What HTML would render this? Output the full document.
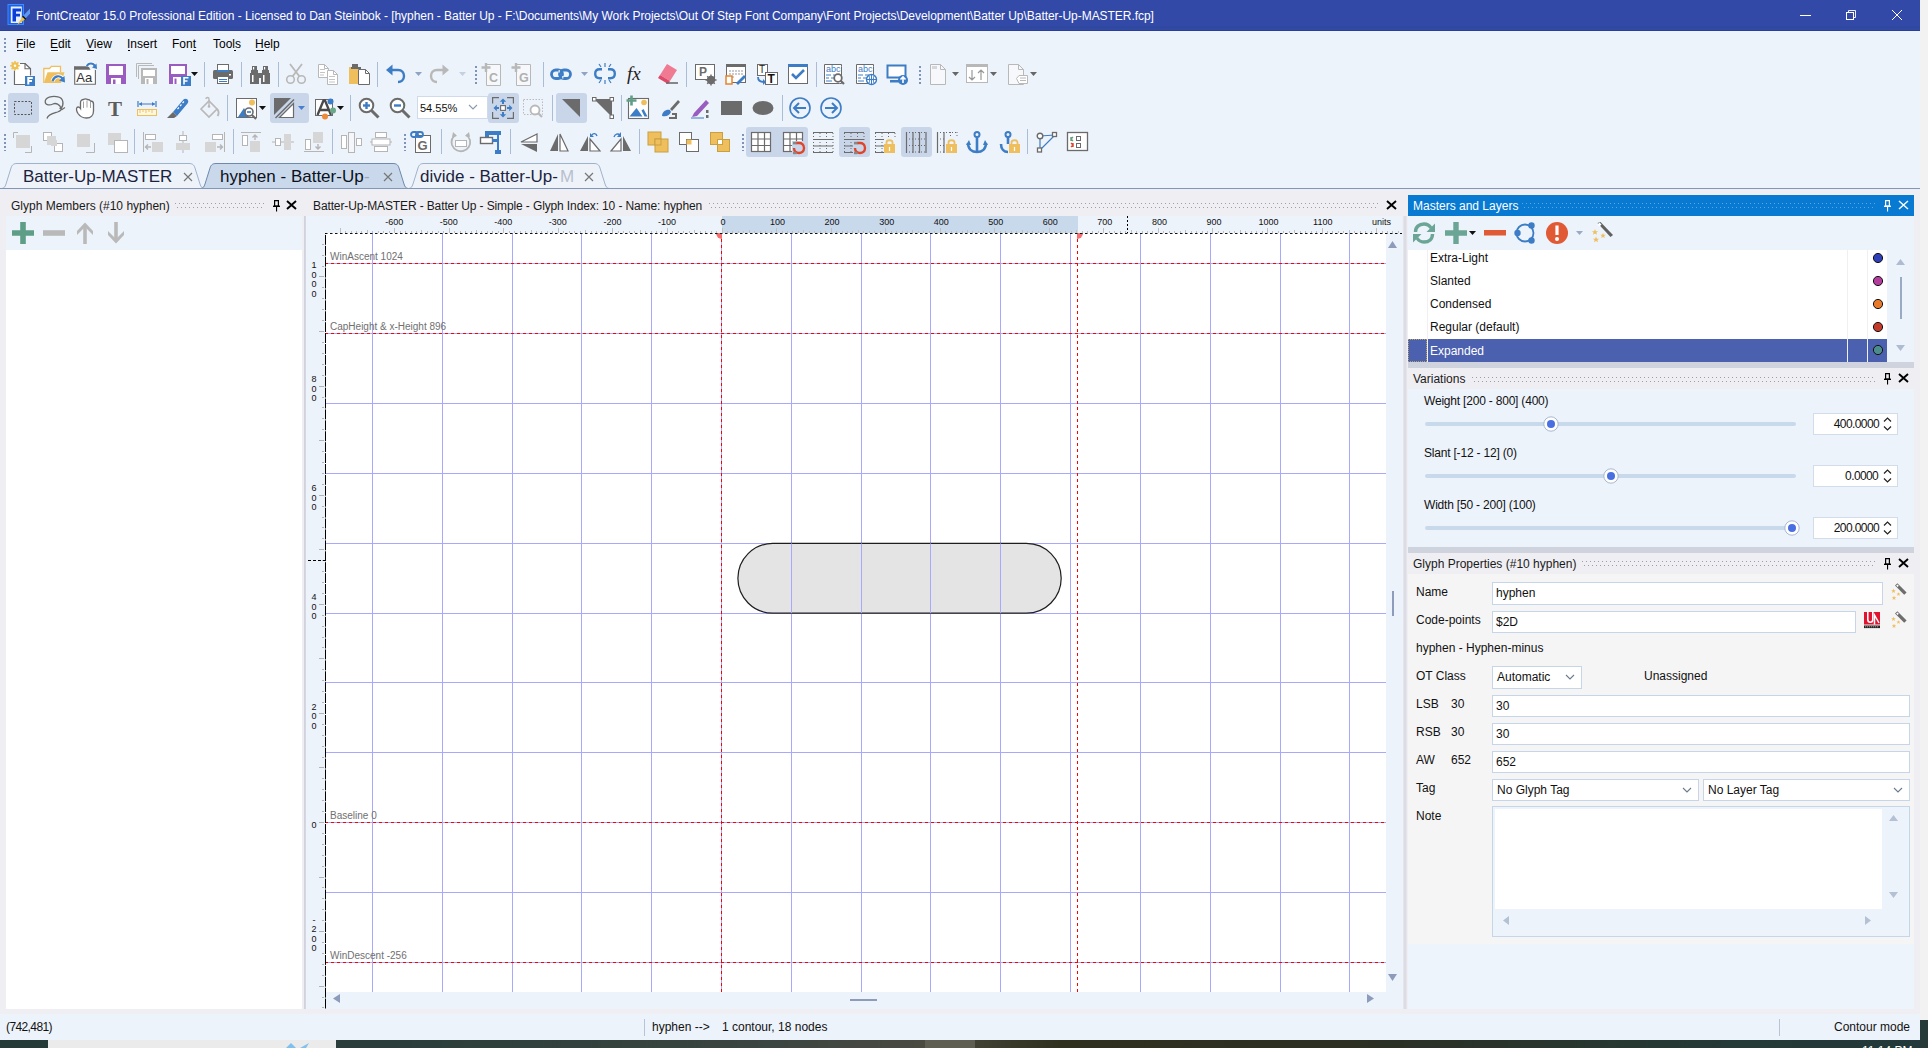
<!DOCTYPE html><html><head><meta charset="utf-8"><style>
html,body{margin:0;padding:0;}
body{width:1928px;height:1048px;overflow:hidden;position:relative;background:#f2f2f2;font-family:"Liberation Sans",sans-serif;}
.t{position:absolute;white-space:pre;}
div,svg{box-sizing:border-box;}
svg{overflow:visible;}
</style></head><body>
<div style="position:absolute;left:0px;top:0px;width:1920px;height:1040px;background:#edf3fb"></div>
<div style="position:absolute;left:0px;top:0px;width:1920px;height:31px;background:linear-gradient(#3249a7 0,#3249a7 26px,#2f49a1 26px,#2f49a1 29px,#3449a6 29px,#3449a6 30px,#283d9c 30px)"></div>
<div class="t" style="left:36px;top:9.84px;font-size:12px;line-height:12px;color:#fff;letter-spacing:-0.045px">FontCreator 15.0 Professional Edition - Licensed to Dan Steinbok - [hyphen - Batter Up - F:\Documents\My Work Projects\Out Of Step Font Company\Font Projects\Development\Batter Up\Batter-Up-MASTER.fcp]</div>
<div style="position:absolute;left:1800px;top:15px;width:11px;height:1px;background:#fff"></div>
<svg style="position:absolute;left:1845px;top:9px;" width="13" height="13" viewBox="0 0 13 13"><rect x="1.5" y="3.5" width="7" height="7" fill="none" stroke="#fff"/><path d="M3.5 3.5V1.5H10.5V8.5H8.5" fill="none" stroke="#fff" stroke-width="0.9"/></svg>
<svg style="position:absolute;left:1891px;top:9px;" width="12" height="12" viewBox="0 0 12 12"><path d="M1 1L11 11M11 1L1 11" stroke="#fff" stroke-width="1"/></svg>
<div class="t" style="left:16px;top:38.34px;font-size:12px;line-height:12px;color:#000;">File</div>
<div style="position:absolute;left:16.5px;top:50px;width:6.8px;height:1px;background:#000"></div>
<div class="t" style="left:50px;top:38.34px;font-size:12px;line-height:12px;color:#000;">Edit</div>
<div style="position:absolute;left:50.5px;top:50px;width:7.5px;height:1px;background:#000"></div>
<div class="t" style="left:86px;top:38.34px;font-size:12px;line-height:12px;color:#000;">View</div>
<div style="position:absolute;left:86.5px;top:50px;width:7.5px;height:1px;background:#000"></div>
<div class="t" style="left:127px;top:38.34px;font-size:12px;line-height:12px;color:#000;">Insert</div>
<div style="position:absolute;left:127.5px;top:50px;width:2.8px;height:1px;background:#000"></div>
<div class="t" style="left:172px;top:38.34px;font-size:12px;line-height:12px;color:#000;">Font</div>
<div style="position:absolute;left:193.2px;top:50px;width:2.8px;height:1px;background:#000"></div>
<div class="t" style="left:213px;top:38.34px;font-size:12px;line-height:12px;color:#000;">Tools</div>
<div style="position:absolute;left:234.2px;top:50px;width:2.2px;height:1px;background:#000"></div>
<div class="t" style="left:255px;top:38.34px;font-size:12px;line-height:12px;color:#000;">Help</div>
<div style="position:absolute;left:255.5px;top:50px;width:8.2px;height:1px;background:#000"></div>
<div style="position:absolute;left:0px;top:188px;width:1920px;height:1px;background:#8aa0bf"></div>
<div style="position:absolute;left:0px;top:189px;width:1920px;height:6px;background:#efeef3"></div>
<svg style="position:absolute;left:408px;top:163px;" width="203" height="27" viewBox="0 0 203 27"><path d="M0.5 25.5 C3 25.5 4 24 5 21 L10 5 C11 1.5 13 0.5 16 0.5 L186 0.5 C189 0.5 191 1.5 192 5 L197 21 C198 24 199 25.5 201.5 25.5" fill="#eef3fa" stroke="#9fb2cc"/></svg>
<svg style="position:absolute;left:1px;top:163px;" width="205" height="27" viewBox="0 0 205 27"><path d="M0.5 25.5 C3 25.5 4 24 5 21 L10 5 C11 1.5 13 0.5 16 0.5 L188 0.5 C191 0.5 193 1.5 194 5 L199 21 C200 24 201 25.5 203.5 25.5" fill="#eef3fa" stroke="#9fb2cc"/></svg>
<svg style="position:absolute;left:200px;top:163px;" width="210" height="27" viewBox="0 0 210 27"><path d="M0.5 25.5 C3 25.5 4 24 5 21 L10 5 C11 1.5 13 0.5 16 0.5 L193 0.5 C196 0.5 198 1.5 199 5 L204 21 C205 24 206 25.5 208.5 25.5" fill="#c9d8ea" stroke="#6f89ad"/></svg>
<div style="position:absolute;left:0px;top:188px;width:1920px;height:1px;background:#7f97b8"></div>
<div class="t" style="left:23px;top:168.11px;font-size:17px;line-height:17px;color:#1c2340;">Batter-Up-MASTER</div>
<div class="t" style="left:220px;top:168.11px;font-size:17px;line-height:17px;color:#0c1020;">hyphen - Batter-Up</div>
<div class="t" style="left:364px;top:168.11px;font-size:17px;line-height:17px;color:#9aa5b8;">-</div>
<div class="t" style="left:420px;top:168.11px;font-size:17px;line-height:17px;color:#1c2340;">divide - Batter-Up-</div>
<div class="t" style="left:560px;top:168.11px;font-size:17px;line-height:17px;color:#b8c0cc;">M</div>
<svg style="position:absolute;left:182.5px;top:172px;" width="10" height="10" viewBox="0 0 10 10"><path d="M1 1L9 9M9 1L1 9" stroke="#777" stroke-width="1.2"/></svg>
<svg style="position:absolute;left:383.0px;top:172px;" width="10" height="10" viewBox="0 0 10 10"><path d="M1 1L9 9M9 1L1 9" stroke="#777" stroke-width="1.2"/></svg>
<svg style="position:absolute;left:583.5px;top:172px;" width="10" height="10" viewBox="0 0 10 10"><path d="M1 1L9 9M9 1L1 9" stroke="#777" stroke-width="1.2"/></svg>
<div style="position:absolute;left:0px;top:195px;width:1920px;height:819px;background:#efeef3"></div>
<div class="t" style="left:11px;top:199.84px;font-size:12px;line-height:12px;color:#1a1a1a;">Glyph Members (#10 hyphen)</div>
<svg style="position:absolute;left:175px;top:203px;" width="89" height="6" viewBox="0 0 89 6"><defs><pattern id="dp1" width="4" height="6" patternUnits="userSpaceOnUse"><rect x="0" y="0" width="1" height="1" fill="#9e9ea8"/><rect x="2" y="4" width="1" height="1" fill="#9e9ea8"/></pattern></defs><rect width="89" height="6" fill="url(#dp1)"/></svg>
<svg style="position:absolute;left:273px;top:200px;" width="8" height="12" viewBox="0 0 8 12"><path d="M1 0H6V6H1Z M2.2 1.2V5.5H4.8V1.2Z" fill="#000" fill-rule="evenodd"/><rect x="0" y="5.6" width="7" height="1.4" fill="#000"/><rect x="3" y="7" width="1.1" height="4.5" fill="#000"/></svg>
<svg style="position:absolute;left:285.5px;top:200px;" width="11" height="10" viewBox="0 0 11 10"><path d="M1 1L10 9M10 1L1 9" stroke="#000" stroke-width="1.9"/></svg>
<div style="position:absolute;left:6px;top:216px;width:296px;height:34px;background:#edf3fb"></div>
<div style="position:absolute;left:6px;top:250px;width:296px;height:759px;background:#fff"></div>
<div class="t" style="left:313px;top:199.84px;font-size:12px;line-height:12px;color:#1a1a1a;letter-spacing:-0.12px">Batter-Up-MASTER - Batter Up - Simple - Glyph Index: 10 - Name: hyphen</div>
<svg style="position:absolute;left:709px;top:203px;" width="669" height="6" viewBox="0 0 669 6"><defs><pattern id="dp2" width="4" height="6" patternUnits="userSpaceOnUse"><rect x="0" y="0" width="1" height="1" fill="#9e9ea8"/><rect x="2" y="4" width="1" height="1" fill="#9e9ea8"/></pattern></defs><rect width="669" height="6" fill="url(#dp2)"/></svg>
<svg style="position:absolute;left:1385.5px;top:200px;" width="11" height="10" viewBox="0 0 11 10"><path d="M1 1L10 9M10 1L1 9" stroke="#000" stroke-width="1.9"/></svg>
<div style="position:absolute;left:306px;top:216px;width:1096px;height:17px;background:#edf3fb"></div>
<div style="position:absolute;left:722px;top:216px;width:356px;height:17px;background:#c9d9ec"></div>
<div style="position:absolute;left:306px;top:233px;width:19px;height:776px;background:#edf3fb"></div>
<div style="position:absolute;left:302px;top:216px;width:4px;height:793px;background:linear-gradient(90deg,#efeef3 0,#efeef3 2px,#d0d0dc 2px,#d8d8e2 4px)"></div>
<div style="position:absolute;left:325px;top:233px;width:1061px;height:759px;background:#fff"></div>
<div style="position:absolute;left:1386px;top:233px;width:17px;height:776px;background:#edf3fb"></div>
<div style="position:absolute;left:325px;top:992px;width:1061px;height:17px;background:#edf3fb"></div>
<svg style="position:absolute;left:325px;top:233px;" width="1061" height="759" viewBox="0 0 1061 759"><rect x="47" y="0" width="1" height="759" fill="#a8a8fc"/><rect x="117" y="0" width="1" height="759" fill="#a8a8fc"/><rect x="187" y="0" width="1" height="759" fill="#a8a8fc"/><rect x="256" y="0" width="1" height="759" fill="#a8a8fc"/><rect x="326" y="0" width="1" height="759" fill="#a8a8fc"/><rect x="396" y="0" width="1" height="759" fill="#a8a8fc"/><rect x="466" y="0" width="1" height="759" fill="#a8a8fc"/><rect x="536" y="0" width="1" height="759" fill="#a8a8fc"/><rect x="605" y="0" width="1" height="759" fill="#a8a8fc"/><rect x="675" y="0" width="1" height="759" fill="#a8a8fc"/><rect x="745" y="0" width="1" height="759" fill="#a8a8fc"/><rect x="815" y="0" width="1" height="759" fill="#a8a8fc"/><rect x="885" y="0" width="1" height="759" fill="#a8a8fc"/><rect x="955" y="0" width="1" height="759" fill="#a8a8fc"/><rect x="1024" y="0" width="1" height="759" fill="#a8a8fc"/><rect x="0" y="729" width="1061" height="1" fill="#a8a8fc"/><rect x="0" y="659" width="1061" height="1" fill="#a8a8fc"/><rect x="0" y="589" width="1061" height="1" fill="#a8a8fc"/><rect x="0" y="519" width="1061" height="1" fill="#a8a8fc"/><rect x="0" y="449" width="1061" height="1" fill="#a8a8fc"/><rect x="0" y="380" width="1061" height="1" fill="#a8a8fc"/><rect x="0" y="310" width="1061" height="1" fill="#a8a8fc"/><rect x="0" y="240" width="1061" height="1" fill="#a8a8fc"/><rect x="0" y="170" width="1061" height="1" fill="#a8a8fc"/><rect x="0" y="100" width="1061" height="1" fill="#a8a8fc"/><rect x="0" y="30" width="1061" height="1" fill="#a8a8fc"/><rect x="412.9" y="310.4" width="323.3" height="69.8" rx="34.9" ry="34.9" fill="#e4e4e4" stroke="#1e1e1e" stroke-width="1.2"/><rect x="466" y="310.4" width="1" height="69.8" fill="#a8a8fc"/><rect x="536" y="310.4" width="1" height="69.8" fill="#a8a8fc"/><rect x="605" y="310.4" width="1" height="69.8" fill="#a8a8fc"/><rect x="675" y="310.4" width="1" height="69.8" fill="#a8a8fc"/><line x1="0" y1="30.5" x2="1061" y2="30.5" stroke="#ff0000" stroke-width="1" stroke-dasharray="3 3"/><line x1="0" y1="100.5" x2="1061" y2="100.5" stroke="#ff0000" stroke-width="1" stroke-dasharray="3 3"/><line x1="0" y1="589.5" x2="1061" y2="589.5" stroke="#ff0000" stroke-width="1" stroke-dasharray="3 3"/><line x1="0" y1="729.5" x2="1061" y2="729.5" stroke="#ff0000" stroke-width="1" stroke-dasharray="3 3"/><line x1="396.5" y1="0" x2="396.5" y2="759" stroke="#ff0000" stroke-width="1" stroke-dasharray="3 3"/><line x1="752.5" y1="0" x2="752.5" y2="759" stroke="#ff0000" stroke-width="1" stroke-dasharray="3 3"/><path d="M397 0 L391 0 A6 6 0 0 0 397 6Z" fill="#f47070"/><path d="M752 0 L758 0 A6 6 0 0 1 752 6Z" fill="#f47070"/></svg>
<div class="t" style="left:330px;top:251.53px;font-size:10px;line-height:10px;color:#707070;">WinAscent 1024</div>
<div class="t" style="left:330px;top:321.54px;font-size:10px;line-height:10px;color:#707070;">CapHeight &amp; x-Height 896</div>
<div class="t" style="left:330px;top:810.53px;font-size:10px;line-height:10px;color:#707070;">Baseline 0</div>
<div class="t" style="left:330px;top:950.53px;font-size:10px;line-height:10px;color:#707070;">WinDescent -256</div>
<svg style="position:absolute;left:308px;top:216px;" width="1094" height="19" viewBox="0 0 1094 19"><line x1="17" y1="17.5" x2="1094" y2="17.5" stroke="#111" stroke-dasharray="2.5 2.5"/></svg>
<svg style="position:absolute;left:325px;top:233px;" width="1" height="776" viewBox="0 0 1 776"><line x1="0.5" y1="0" x2="0.5" y2="776" stroke="#000" stroke-width="1" stroke-dasharray="9.91 1" stroke-dashoffset="-1.9"/></svg>
<svg style="position:absolute;left:308px;top:216px;" width="1094" height="17" viewBox="0 0 1094 17"><rect x="32" y="12" width="1" height="5" fill="#c0c0c0"/><rect x="37" y="15" width="1" height="2" fill="#c0c0c0"/><rect x="43" y="15" width="1" height="2" fill="#c0c0c0"/><rect x="48" y="15" width="1" height="2" fill="#c0c0c0"/><rect x="53" y="15" width="1" height="2" fill="#c0c0c0"/><rect x="59" y="14" width="1" height="3" fill="#c0c0c0"/><rect x="64" y="15" width="1" height="2" fill="#c0c0c0"/><rect x="70" y="15" width="1" height="2" fill="#c0c0c0"/><rect x="75" y="15" width="1" height="2" fill="#c0c0c0"/><rect x="81" y="15" width="1" height="2" fill="#c0c0c0"/><rect x="86" y="12" width="1" height="5" fill="#c0c0c0"/><rect x="92" y="15" width="1" height="2" fill="#c0c0c0"/><rect x="97" y="15" width="1" height="2" fill="#c0c0c0"/><rect x="103" y="15" width="1" height="2" fill="#c0c0c0"/><rect x="108" y="15" width="1" height="2" fill="#c0c0c0"/><rect x="113" y="14" width="1" height="3" fill="#c0c0c0"/><rect x="119" y="15" width="1" height="2" fill="#c0c0c0"/><rect x="124" y="15" width="1" height="2" fill="#c0c0c0"/><rect x="130" y="15" width="1" height="2" fill="#c0c0c0"/><rect x="135" y="15" width="1" height="2" fill="#c0c0c0"/><rect x="141" y="12" width="1" height="5" fill="#c0c0c0"/><rect x="146" y="15" width="1" height="2" fill="#c0c0c0"/><rect x="152" y="15" width="1" height="2" fill="#c0c0c0"/><rect x="157" y="15" width="1" height="2" fill="#c0c0c0"/><rect x="163" y="15" width="1" height="2" fill="#c0c0c0"/><rect x="168" y="14" width="1" height="3" fill="#c0c0c0"/><rect x="173" y="15" width="1" height="2" fill="#c0c0c0"/><rect x="179" y="15" width="1" height="2" fill="#c0c0c0"/><rect x="184" y="15" width="1" height="2" fill="#c0c0c0"/><rect x="190" y="15" width="1" height="2" fill="#c0c0c0"/><rect x="195" y="12" width="1" height="5" fill="#c0c0c0"/><rect x="201" y="15" width="1" height="2" fill="#c0c0c0"/><rect x="206" y="15" width="1" height="2" fill="#c0c0c0"/><rect x="212" y="15" width="1" height="2" fill="#c0c0c0"/><rect x="217" y="15" width="1" height="2" fill="#c0c0c0"/><rect x="223" y="14" width="1" height="3" fill="#c0c0c0"/><rect x="228" y="15" width="1" height="2" fill="#c0c0c0"/><rect x="233" y="15" width="1" height="2" fill="#c0c0c0"/><rect x="239" y="15" width="1" height="2" fill="#c0c0c0"/><rect x="244" y="15" width="1" height="2" fill="#c0c0c0"/><rect x="250" y="12" width="1" height="5" fill="#c0c0c0"/><rect x="255" y="15" width="1" height="2" fill="#c0c0c0"/><rect x="261" y="15" width="1" height="2" fill="#c0c0c0"/><rect x="266" y="15" width="1" height="2" fill="#c0c0c0"/><rect x="272" y="15" width="1" height="2" fill="#c0c0c0"/><rect x="277" y="14" width="1" height="3" fill="#c0c0c0"/><rect x="283" y="15" width="1" height="2" fill="#c0c0c0"/><rect x="288" y="15" width="1" height="2" fill="#c0c0c0"/><rect x="293" y="15" width="1" height="2" fill="#c0c0c0"/><rect x="299" y="15" width="1" height="2" fill="#c0c0c0"/><rect x="304" y="12" width="1" height="5" fill="#c0c0c0"/><rect x="310" y="15" width="1" height="2" fill="#c0c0c0"/><rect x="315" y="15" width="1" height="2" fill="#c0c0c0"/><rect x="321" y="15" width="1" height="2" fill="#c0c0c0"/><rect x="326" y="15" width="1" height="2" fill="#c0c0c0"/><rect x="332" y="14" width="1" height="3" fill="#c0c0c0"/><rect x="337" y="15" width="1" height="2" fill="#c0c0c0"/><rect x="343" y="15" width="1" height="2" fill="#c0c0c0"/><rect x="348" y="15" width="1" height="2" fill="#c0c0c0"/><rect x="353" y="15" width="1" height="2" fill="#c0c0c0"/><rect x="359" y="12" width="1" height="5" fill="#c0c0c0"/><rect x="364" y="15" width="1" height="2" fill="#c0c0c0"/><rect x="370" y="15" width="1" height="2" fill="#c0c0c0"/><rect x="375" y="15" width="1" height="2" fill="#c0c0c0"/><rect x="381" y="15" width="1" height="2" fill="#c0c0c0"/><rect x="386" y="14" width="1" height="3" fill="#c0c0c0"/><rect x="392" y="15" width="1" height="2" fill="#c0c0c0"/><rect x="397" y="15" width="1" height="2" fill="#c0c0c0"/><rect x="403" y="15" width="1" height="2" fill="#c0c0c0"/><rect x="408" y="15" width="1" height="2" fill="#c0c0c0"/><rect x="414" y="12" width="1" height="5" fill="#c0c0c0"/><rect x="419" y="15" width="1" height="2" fill="#c0c0c0"/><rect x="424" y="15" width="1" height="2" fill="#c0c0c0"/><rect x="430" y="15" width="1" height="2" fill="#c0c0c0"/><rect x="435" y="15" width="1" height="2" fill="#c0c0c0"/><rect x="441" y="14" width="1" height="3" fill="#c0c0c0"/><rect x="446" y="15" width="1" height="2" fill="#c0c0c0"/><rect x="452" y="15" width="1" height="2" fill="#c0c0c0"/><rect x="457" y="15" width="1" height="2" fill="#c0c0c0"/><rect x="463" y="15" width="1" height="2" fill="#c0c0c0"/><rect x="468" y="12" width="1" height="5" fill="#c0c0c0"/><rect x="474" y="15" width="1" height="2" fill="#c0c0c0"/><rect x="479" y="15" width="1" height="2" fill="#c0c0c0"/><rect x="484" y="15" width="1" height="2" fill="#c0c0c0"/><rect x="490" y="15" width="1" height="2" fill="#c0c0c0"/><rect x="495" y="14" width="1" height="3" fill="#c0c0c0"/><rect x="501" y="15" width="1" height="2" fill="#c0c0c0"/><rect x="506" y="15" width="1" height="2" fill="#c0c0c0"/><rect x="512" y="15" width="1" height="2" fill="#c0c0c0"/><rect x="517" y="15" width="1" height="2" fill="#c0c0c0"/><rect x="523" y="12" width="1" height="5" fill="#c0c0c0"/><rect x="528" y="15" width="1" height="2" fill="#c0c0c0"/><rect x="534" y="15" width="1" height="2" fill="#c0c0c0"/><rect x="539" y="15" width="1" height="2" fill="#c0c0c0"/><rect x="544" y="15" width="1" height="2" fill="#c0c0c0"/><rect x="550" y="14" width="1" height="3" fill="#c0c0c0"/><rect x="555" y="15" width="1" height="2" fill="#c0c0c0"/><rect x="561" y="15" width="1" height="2" fill="#c0c0c0"/><rect x="566" y="15" width="1" height="2" fill="#c0c0c0"/><rect x="572" y="15" width="1" height="2" fill="#c0c0c0"/><rect x="577" y="12" width="1" height="5" fill="#c0c0c0"/><rect x="583" y="15" width="1" height="2" fill="#c0c0c0"/><rect x="588" y="15" width="1" height="2" fill="#c0c0c0"/><rect x="594" y="15" width="1" height="2" fill="#c0c0c0"/><rect x="599" y="15" width="1" height="2" fill="#c0c0c0"/><rect x="604" y="14" width="1" height="3" fill="#c0c0c0"/><rect x="610" y="15" width="1" height="2" fill="#c0c0c0"/><rect x="615" y="15" width="1" height="2" fill="#c0c0c0"/><rect x="621" y="15" width="1" height="2" fill="#c0c0c0"/><rect x="626" y="15" width="1" height="2" fill="#c0c0c0"/><rect x="632" y="12" width="1" height="5" fill="#c0c0c0"/><rect x="637" y="15" width="1" height="2" fill="#c0c0c0"/><rect x="643" y="15" width="1" height="2" fill="#c0c0c0"/><rect x="648" y="15" width="1" height="2" fill="#c0c0c0"/><rect x="654" y="15" width="1" height="2" fill="#c0c0c0"/><rect x="659" y="14" width="1" height="3" fill="#c0c0c0"/><rect x="664" y="15" width="1" height="2" fill="#c0c0c0"/><rect x="670" y="15" width="1" height="2" fill="#c0c0c0"/><rect x="675" y="15" width="1" height="2" fill="#c0c0c0"/><rect x="681" y="15" width="1" height="2" fill="#c0c0c0"/><rect x="686" y="12" width="1" height="5" fill="#c0c0c0"/><rect x="692" y="15" width="1" height="2" fill="#c0c0c0"/><rect x="697" y="15" width="1" height="2" fill="#c0c0c0"/><rect x="703" y="15" width="1" height="2" fill="#c0c0c0"/><rect x="708" y="15" width="1" height="2" fill="#c0c0c0"/><rect x="714" y="14" width="1" height="3" fill="#c0c0c0"/><rect x="719" y="15" width="1" height="2" fill="#c0c0c0"/><rect x="724" y="15" width="1" height="2" fill="#c0c0c0"/><rect x="730" y="15" width="1" height="2" fill="#c0c0c0"/><rect x="735" y="15" width="1" height="2" fill="#c0c0c0"/><rect x="741" y="12" width="1" height="5" fill="#c0c0c0"/><rect x="746" y="15" width="1" height="2" fill="#c0c0c0"/><rect x="752" y="15" width="1" height="2" fill="#c0c0c0"/><rect x="757" y="15" width="1" height="2" fill="#c0c0c0"/><rect x="763" y="15" width="1" height="2" fill="#c0c0c0"/><rect x="768" y="14" width="1" height="3" fill="#c0c0c0"/><rect x="774" y="15" width="1" height="2" fill="#c0c0c0"/><rect x="779" y="15" width="1" height="2" fill="#c0c0c0"/><rect x="784" y="15" width="1" height="2" fill="#c0c0c0"/><rect x="790" y="15" width="1" height="2" fill="#c0c0c0"/><rect x="795" y="12" width="1" height="5" fill="#c0c0c0"/><rect x="801" y="15" width="1" height="2" fill="#c0c0c0"/><rect x="806" y="15" width="1" height="2" fill="#c0c0c0"/><rect x="812" y="15" width="1" height="2" fill="#c0c0c0"/><rect x="817" y="15" width="1" height="2" fill="#c0c0c0"/><rect x="823" y="14" width="1" height="3" fill="#c0c0c0"/><rect x="828" y="15" width="1" height="2" fill="#c0c0c0"/><rect x="834" y="15" width="1" height="2" fill="#c0c0c0"/><rect x="839" y="15" width="1" height="2" fill="#c0c0c0"/><rect x="844" y="15" width="1" height="2" fill="#c0c0c0"/><rect x="850" y="12" width="1" height="5" fill="#c0c0c0"/><rect x="855" y="15" width="1" height="2" fill="#c0c0c0"/><rect x="861" y="15" width="1" height="2" fill="#c0c0c0"/><rect x="866" y="15" width="1" height="2" fill="#c0c0c0"/><rect x="872" y="15" width="1" height="2" fill="#c0c0c0"/><rect x="877" y="14" width="1" height="3" fill="#c0c0c0"/><rect x="883" y="15" width="1" height="2" fill="#c0c0c0"/><rect x="888" y="15" width="1" height="2" fill="#c0c0c0"/><rect x="894" y="15" width="1" height="2" fill="#c0c0c0"/><rect x="899" y="15" width="1" height="2" fill="#c0c0c0"/><rect x="904" y="12" width="1" height="5" fill="#c0c0c0"/><rect x="910" y="15" width="1" height="2" fill="#c0c0c0"/><rect x="915" y="15" width="1" height="2" fill="#c0c0c0"/><rect x="921" y="15" width="1" height="2" fill="#c0c0c0"/><rect x="926" y="15" width="1" height="2" fill="#c0c0c0"/><rect x="932" y="14" width="1" height="3" fill="#c0c0c0"/><rect x="937" y="15" width="1" height="2" fill="#c0c0c0"/><rect x="943" y="15" width="1" height="2" fill="#c0c0c0"/><rect x="948" y="15" width="1" height="2" fill="#c0c0c0"/><rect x="954" y="15" width="1" height="2" fill="#c0c0c0"/><rect x="959" y="12" width="1" height="5" fill="#c0c0c0"/><rect x="964" y="15" width="1" height="2" fill="#c0c0c0"/><rect x="970" y="15" width="1" height="2" fill="#c0c0c0"/><rect x="975" y="15" width="1" height="2" fill="#c0c0c0"/><rect x="981" y="15" width="1" height="2" fill="#c0c0c0"/><rect x="986" y="14" width="1" height="3" fill="#c0c0c0"/><rect x="992" y="15" width="1" height="2" fill="#c0c0c0"/><rect x="997" y="15" width="1" height="2" fill="#c0c0c0"/><rect x="1003" y="15" width="1" height="2" fill="#c0c0c0"/><rect x="1008" y="15" width="1" height="2" fill="#c0c0c0"/><rect x="1014" y="12" width="1" height="5" fill="#c0c0c0"/><rect x="1019" y="15" width="1" height="2" fill="#c0c0c0"/><rect x="1024" y="15" width="1" height="2" fill="#c0c0c0"/><rect x="1030" y="15" width="1" height="2" fill="#c0c0c0"/><rect x="1035" y="15" width="1" height="2" fill="#c0c0c0"/><rect x="1041" y="14" width="1" height="3" fill="#c0c0c0"/><rect x="1046" y="15" width="1" height="2" fill="#c0c0c0"/><rect x="1052" y="15" width="1" height="2" fill="#c0c0c0"/><rect x="1057" y="15" width="1" height="2" fill="#c0c0c0"/><rect x="1063" y="15" width="1" height="2" fill="#c0c0c0"/><rect x="1068" y="12" width="1" height="5" fill="#c0c0c0"/><rect x="1074" y="15" width="1" height="2" fill="#c0c0c0"/><rect x="1079" y="15" width="1" height="2" fill="#c0c0c0"/><rect x="1084" y="15" width="1" height="2" fill="#c0c0c0"/><rect x="1090" y="15" width="1" height="2" fill="#c0c0c0"/></svg>
<div class="t" style="left:385.2px;top:218.38px;font-size:9px;line-height:9px;color:#111;">-600</div>
<div class="t" style="left:439.75px;top:218.38px;font-size:9px;line-height:9px;color:#111;">-500</div>
<div class="t" style="left:494.3px;top:218.38px;font-size:9px;line-height:9px;color:#111;">-400</div>
<div class="t" style="left:548.85px;top:218.38px;font-size:9px;line-height:9px;color:#111;">-300</div>
<div class="t" style="left:603.4px;top:218.38px;font-size:9px;line-height:9px;color:#111;">-200</div>
<div class="t" style="left:657.95px;top:218.38px;font-size:9px;line-height:9px;color:#111;">-100</div>
<div class="t" style="left:720.5px;top:218.38px;font-size:9px;line-height:9px;color:#111;">0</div>
<div class="t" style="left:770.05px;top:218.38px;font-size:9px;line-height:9px;color:#111;">100</div>
<div class="t" style="left:824.6px;top:218.38px;font-size:9px;line-height:9px;color:#111;">200</div>
<div class="t" style="left:879.15px;top:218.38px;font-size:9px;line-height:9px;color:#111;">300</div>
<div class="t" style="left:933.7px;top:218.38px;font-size:9px;line-height:9px;color:#111;">400</div>
<div class="t" style="left:988.25px;top:218.38px;font-size:9px;line-height:9px;color:#111;">500</div>
<div class="t" style="left:1042.8px;top:218.38px;font-size:9px;line-height:9px;color:#111;">600</div>
<div class="t" style="left:1097.35px;top:218.38px;font-size:9px;line-height:9px;color:#111;">700</div>
<div class="t" style="left:1151.9px;top:218.38px;font-size:9px;line-height:9px;color:#111;">800</div>
<div class="t" style="left:1206.45px;top:218.38px;font-size:9px;line-height:9px;color:#111;">900</div>
<div class="t" style="left:1258.5px;top:218.38px;font-size:9px;line-height:9px;color:#111;">1000</div>
<div class="t" style="left:1313.05px;top:218.38px;font-size:9px;line-height:9px;color:#111;">1100</div>
<div class="t" style="left:1372px;top:218.38px;font-size:9px;line-height:9px;color:#111;">units</div>
<svg style="position:absolute;left:1127px;top:216px;" width="1" height="17" viewBox="0 0 1 17"><line x1="0.5" y1="0" x2="0.5" y2="17" stroke="#000" stroke-dasharray="2 2"/></svg>
<svg style="position:absolute;left:305px;top:233px;" width="20" height="776" viewBox="0 0 20 776"><rect x="17" y="774" width="2" height="1" fill="#b4b4b4"/><rect x="17" y="764" width="2" height="1" fill="#b4b4b4"/><rect x="14" y="753" width="5" height="1" fill="#b4b4b4"/><rect x="17" y="742" width="2" height="1" fill="#b4b4b4"/><rect x="17" y="731" width="2" height="1" fill="#b4b4b4"/><rect x="17" y="720" width="2" height="1" fill="#b4b4b4"/><rect x="17" y="709" width="2" height="1" fill="#b4b4b4"/><rect x="14" y="698" width="5" height="1" fill="#b4b4b4"/><rect x="17" y="687" width="2" height="1" fill="#b4b4b4"/><rect x="17" y="676" width="2" height="1" fill="#b4b4b4"/><rect x="17" y="665" width="2" height="1" fill="#b4b4b4"/><rect x="17" y="654" width="2" height="1" fill="#b4b4b4"/><rect x="14" y="644" width="5" height="1" fill="#b4b4b4"/><rect x="17" y="633" width="2" height="1" fill="#b4b4b4"/><rect x="17" y="622" width="2" height="1" fill="#b4b4b4"/><rect x="17" y="611" width="2" height="1" fill="#b4b4b4"/><rect x="17" y="600" width="2" height="1" fill="#b4b4b4"/><rect x="14" y="589" width="5" height="1" fill="#b4b4b4"/><rect x="17" y="578" width="2" height="1" fill="#b4b4b4"/><rect x="17" y="567" width="2" height="1" fill="#b4b4b4"/><rect x="17" y="556" width="2" height="1" fill="#b4b4b4"/><rect x="17" y="545" width="2" height="1" fill="#b4b4b4"/><rect x="14" y="534" width="5" height="1" fill="#b4b4b4"/><rect x="17" y="524" width="2" height="1" fill="#b4b4b4"/><rect x="17" y="513" width="2" height="1" fill="#b4b4b4"/><rect x="17" y="502" width="2" height="1" fill="#b4b4b4"/><rect x="17" y="491" width="2" height="1" fill="#b4b4b4"/><rect x="14" y="480" width="5" height="1" fill="#b4b4b4"/><rect x="17" y="469" width="2" height="1" fill="#b4b4b4"/><rect x="17" y="458" width="2" height="1" fill="#b4b4b4"/><rect x="17" y="447" width="2" height="1" fill="#b4b4b4"/><rect x="17" y="436" width="2" height="1" fill="#b4b4b4"/><rect x="14" y="425" width="5" height="1" fill="#b4b4b4"/><rect x="17" y="414" width="2" height="1" fill="#b4b4b4"/><rect x="17" y="404" width="2" height="1" fill="#b4b4b4"/><rect x="17" y="393" width="2" height="1" fill="#b4b4b4"/><rect x="17" y="382" width="2" height="1" fill="#b4b4b4"/><rect x="14" y="371" width="5" height="1" fill="#b4b4b4"/><rect x="17" y="360" width="2" height="1" fill="#b4b4b4"/><rect x="17" y="349" width="2" height="1" fill="#b4b4b4"/><rect x="17" y="338" width="2" height="1" fill="#b4b4b4"/><rect x="17" y="327" width="2" height="1" fill="#b4b4b4"/><rect x="14" y="316" width="5" height="1" fill="#b4b4b4"/><rect x="17" y="305" width="2" height="1" fill="#b4b4b4"/><rect x="17" y="294" width="2" height="1" fill="#b4b4b4"/><rect x="17" y="284" width="2" height="1" fill="#b4b4b4"/><rect x="17" y="273" width="2" height="1" fill="#b4b4b4"/><rect x="14" y="262" width="5" height="1" fill="#b4b4b4"/><rect x="17" y="251" width="2" height="1" fill="#b4b4b4"/><rect x="17" y="240" width="2" height="1" fill="#b4b4b4"/><rect x="17" y="229" width="2" height="1" fill="#b4b4b4"/><rect x="17" y="218" width="2" height="1" fill="#b4b4b4"/><rect x="14" y="207" width="5" height="1" fill="#b4b4b4"/><rect x="17" y="196" width="2" height="1" fill="#b4b4b4"/><rect x="17" y="185" width="2" height="1" fill="#b4b4b4"/><rect x="17" y="174" width="2" height="1" fill="#b4b4b4"/><rect x="17" y="164" width="2" height="1" fill="#b4b4b4"/><rect x="14" y="153" width="5" height="1" fill="#b4b4b4"/><rect x="17" y="142" width="2" height="1" fill="#b4b4b4"/><rect x="17" y="131" width="2" height="1" fill="#b4b4b4"/><rect x="17" y="120" width="2" height="1" fill="#b4b4b4"/><rect x="17" y="109" width="2" height="1" fill="#b4b4b4"/><rect x="14" y="98" width="5" height="1" fill="#b4b4b4"/><rect x="17" y="87" width="2" height="1" fill="#b4b4b4"/><rect x="17" y="76" width="2" height="1" fill="#b4b4b4"/><rect x="17" y="65" width="2" height="1" fill="#b4b4b4"/><rect x="17" y="54" width="2" height="1" fill="#b4b4b4"/><rect x="14" y="43" width="5" height="1" fill="#b4b4b4"/><rect x="17" y="33" width="2" height="1" fill="#b4b4b4"/><rect x="17" y="22" width="2" height="1" fill="#b4b4b4"/><rect x="17" y="11" width="2" height="1" fill="#b4b4b4"/></svg>
<div class="t" style="left:311.5px;top:261.38px;font-size:9px;line-height:9px;color:#111;">1</div>
<div class="t" style="left:311.5px;top:270.88px;font-size:9px;line-height:9px;color:#111;">0</div>
<div class="t" style="left:311.5px;top:280.38px;font-size:9px;line-height:9px;color:#111;">0</div>
<div class="t" style="left:311.5px;top:289.88px;font-size:9px;line-height:9px;color:#111;">0</div>
<div class="t" style="left:311.5px;top:375.23px;font-size:9px;line-height:9px;color:#111;">8</div>
<div class="t" style="left:311.5px;top:384.73px;font-size:9px;line-height:9px;color:#111;">0</div>
<div class="t" style="left:311.5px;top:394.23px;font-size:9px;line-height:9px;color:#111;">0</div>
<div class="t" style="left:311.5px;top:484.33px;font-size:9px;line-height:9px;color:#111;">6</div>
<div class="t" style="left:311.5px;top:493.83px;font-size:9px;line-height:9px;color:#111;">0</div>
<div class="t" style="left:311.5px;top:503.33px;font-size:9px;line-height:9px;color:#111;">0</div>
<div class="t" style="left:311.5px;top:593.43px;font-size:9px;line-height:9px;color:#111;">4</div>
<div class="t" style="left:311.5px;top:602.93px;font-size:9px;line-height:9px;color:#111;">0</div>
<div class="t" style="left:311.5px;top:612.43px;font-size:9px;line-height:9px;color:#111;">0</div>
<div class="t" style="left:311.5px;top:702.53px;font-size:9px;line-height:9px;color:#111;">2</div>
<div class="t" style="left:311.5px;top:712.03px;font-size:9px;line-height:9px;color:#111;">0</div>
<div class="t" style="left:311.5px;top:721.53px;font-size:9px;line-height:9px;color:#111;">0</div>
<div class="t" style="left:311.5px;top:821.13px;font-size:9px;line-height:9px;color:#111;">0</div>
<div class="t" style="left:312.5px;top:915.98px;font-size:9px;line-height:9px;color:#111;">-</div>
<div class="t" style="left:311.5px;top:925.48px;font-size:9px;line-height:9px;color:#111;">2</div>
<div class="t" style="left:311.5px;top:934.98px;font-size:9px;line-height:9px;color:#111;">0</div>
<div class="t" style="left:311.5px;top:944.48px;font-size:9px;line-height:9px;color:#111;">0</div>
<svg style="position:absolute;left:308px;top:560px;" width="17" height="1" viewBox="0 0 17 1"><line x1="0" y1="0.5" x2="17" y2="0.5" stroke="#000" stroke-dasharray="3 2"/></svg>
<svg style="position:absolute;left:1388px;top:241px;" width="9" height="7" viewBox="0 0 9 7"><path d="M0 7L4.5 0L9 7Z" fill="#8c9cba"/></svg>
<svg style="position:absolute;left:1388px;top:974px;" width="9" height="7" viewBox="0 0 9 7"><path d="M0 0L4.5 7L9 0Z" fill="#8c9cba"/></svg>
<svg style="position:absolute;left:333px;top:994px;" width="7" height="9" viewBox="0 0 7 9"><path d="M7 0L0 4.5L7 9Z" fill="#8c9cba"/></svg>
<svg style="position:absolute;left:1367px;top:994px;" width="7" height="9" viewBox="0 0 7 9"><path d="M0 0L7 4.5L0 9Z" fill="#8c9cba"/></svg>
<div style="position:absolute;left:1392px;top:591px;width:2px;height:25px;background:#8c9cba"></div>
<div style="position:absolute;left:850px;top:999px;width:27px;height:2px;background:#8c9cba"></div>
<div style="position:absolute;left:1408px;top:195px;width:506px;height:21px;background:#087ad2"></div>
<div class="t" style="left:1413px;top:199.84px;font-size:12px;line-height:12px;color:#fff;">Masters and Layers</div>
<svg style="position:absolute;left:1522px;top:203px;" width="354" height="6" viewBox="0 0 354 6"><defs><pattern id="dp3" width="4" height="6" patternUnits="userSpaceOnUse"><rect x="0" y="0" width="1" height="1" fill="#5aa6e6"/><rect x="2" y="4" width="1" height="1" fill="#5aa6e6"/></pattern></defs><rect width="354" height="6" fill="url(#dp3)"/></svg>
<svg style="position:absolute;left:1884px;top:200px;" width="8" height="12" viewBox="0 0 8 12"><path d="M1 0H6V6H1Z M2.2 1.2V5.5H4.8V1.2Z" fill="#fff" fill-rule="evenodd"/><rect x="0" y="5.6" width="7" height="1.4" fill="#fff"/><rect x="3" y="7" width="1.1" height="4.5" fill="#fff"/></svg>
<svg style="position:absolute;left:1897.5px;top:200px;" width="11" height="10" viewBox="0 0 11 10"><path d="M1 1L10 9M10 1L1 9" stroke="#fff" stroke-width="1.4"/></svg>
<div style="position:absolute;left:1408px;top:216px;width:506px;height:34px;background:#edf3fb"></div>
<div style="position:absolute;left:1408px;top:250px;width:479px;height:112px;background:#fff"></div>
<div style="position:absolute;left:1887px;top:250px;width:27px;height:112px;background:#edf3fb"></div>
<div class="t" style="left:1430px;top:251.84px;font-size:12px;line-height:12px;color:#111;">Extra-Light</div>
<svg style="position:absolute;left:1872px;top:252px;" width="12" height="12" viewBox="0 0 12 12"><circle cx="6" cy="6" r="4.6" fill="#2f3fb5" stroke="#111" stroke-width="1"/></svg>
<div class="t" style="left:1430px;top:274.84px;font-size:12px;line-height:12px;color:#111;">Slanted</div>
<svg style="position:absolute;left:1872px;top:275px;" width="12" height="12" viewBox="0 0 12 12"><circle cx="6" cy="6" r="4.6" fill="#b43c9c" stroke="#111" stroke-width="1"/></svg>
<div class="t" style="left:1430px;top:297.84px;font-size:12px;line-height:12px;color:#111;">Condensed</div>
<svg style="position:absolute;left:1872px;top:298px;" width="12" height="12" viewBox="0 0 12 12"><circle cx="6" cy="6" r="4.6" fill="#e87a2a" stroke="#111" stroke-width="1"/></svg>
<div class="t" style="left:1430px;top:320.84px;font-size:12px;line-height:12px;color:#111;">Regular (default)</div>
<svg style="position:absolute;left:1872px;top:321px;" width="12" height="12" viewBox="0 0 12 12"><circle cx="6" cy="6" r="4.6" fill="#c43a2a" stroke="#111" stroke-width="1"/></svg>
<div style="position:absolute;left:1427px;top:339px;width:420px;height:23px;background:#4b60ae"></div>
<div style="position:absolute;left:1848px;top:339px;width:19px;height:23px;background:#4b60ae"></div>
<div style="position:absolute;left:1868px;top:339px;width:19px;height:23px;background:#4b60ae"></div>
<div style="position:absolute;left:1408px;top:339px;width:19px;height:23px;background:#4b60ae;border:1px dotted #b8a060"></div>
<div class="t" style="left:1430px;top:344.84px;font-size:12px;line-height:12px;color:#fff;">Expanded</div>
<svg style="position:absolute;left:1872px;top:344px;" width="12" height="12" viewBox="0 0 12 12"><circle cx="6" cy="6" r="4.6" fill="#4c8c8c" stroke="#111" stroke-width="1"/></svg>
<div style="position:absolute;left:1427px;top:250px;width:1px;height:112px;background:#eef0f4"></div>
<div style="position:absolute;left:1847px;top:250px;width:1px;height:112px;background:#eef0f4"></div>
<div style="position:absolute;left:1867px;top:250px;width:1px;height:112px;background:#eef0f4"></div>
<svg style="position:absolute;left:1896px;top:259px;" width="9" height="6" viewBox="0 0 9 6"><path d="M0 6L4.5 0L9 6Z" fill="#aebbd0"/></svg>
<svg style="position:absolute;left:1896px;top:345px;" width="9" height="6" viewBox="0 0 9 6"><path d="M0 0L4.5 6L9 0Z" fill="#aebbd0"/></svg>
<div style="position:absolute;left:1900px;top:277px;width:2px;height:42px;background:#9aaac4"></div>
<div style="position:absolute;left:1408px;top:362px;width:506px;height:6px;background:#cfd3de"></div>
<div class="t" style="left:1413px;top:372.84px;font-size:12px;line-height:12px;color:#1a1a1a;">Variations</div>
<svg style="position:absolute;left:1472px;top:377px;" width="404" height="6" viewBox="0 0 404 6"><defs><pattern id="dp4" width="4" height="6" patternUnits="userSpaceOnUse"><rect x="0" y="0" width="1" height="1" fill="#9e9ea8"/><rect x="2" y="4" width="1" height="1" fill="#9e9ea8"/></pattern></defs><rect width="404" height="6" fill="url(#dp4)"/></svg>
<svg style="position:absolute;left:1884px;top:373px;" width="8" height="12" viewBox="0 0 8 12"><path d="M1 0H6V6H1Z M2.2 1.2V5.5H4.8V1.2Z" fill="#000" fill-rule="evenodd"/><rect x="0" y="5.6" width="7" height="1.4" fill="#000"/><rect x="3" y="7" width="1.1" height="4.5" fill="#000"/></svg>
<svg style="position:absolute;left:1897.5px;top:373px;" width="11" height="10" viewBox="0 0 11 10"><path d="M1 1L10 9M10 1L1 9" stroke="#000" stroke-width="1.9"/></svg>
<div style="position:absolute;left:1408px;top:389px;width:506px;height:159px;background:#edf3fb"></div>
<div class="t" style="left:1424px;top:394.84px;font-size:12px;line-height:12px;color:#111;letter-spacing:-0.2px">Weight [200 - 800] (400)</div>
<div style="position:absolute;left:1425px;top:422px;width:371px;height:4px;background:#c9d9ec;border-radius:2px"></div>
<svg style="position:absolute;left:1543px;top:416px;" width="16" height="16" viewBox="0 0 16 16"><circle cx="8" cy="8" r="7.2" fill="#fff" stroke="#a9b8cf" stroke-width="1"/><circle cx="8" cy="8" r="4" fill="#4a6fe0"/></svg>
<div style="position:absolute;left:1813px;top:413px;width:85px;height:22px;background:#fff;border:1px solid #d2dceb"></div>
<div class="t" style="left:1833.8px;top:418.34px;font-size:12px;line-height:12px;color:#111;letter-spacing:-0.6px">400.0000</div>
<svg style="position:absolute;left:1883px;top:417px;" width="9" height="14" viewBox="0 0 9 14"><path d="M1 4.5L4.5 1L8 4.5M1 9.5L4.5 13L8 9.5" fill="none" stroke="#222" stroke-width="1.2"/></svg>
<div class="t" style="left:1424px;top:446.84px;font-size:12px;line-height:12px;color:#111;letter-spacing:-0.2px">Slant [-12 - 12] (0)</div>
<div style="position:absolute;left:1425px;top:474px;width:371px;height:4px;background:#c9d9ec;border-radius:2px"></div>
<svg style="position:absolute;left:1603px;top:468px;" width="16" height="16" viewBox="0 0 16 16"><circle cx="8" cy="8" r="7.2" fill="#fff" stroke="#a9b8cf" stroke-width="1"/><circle cx="8" cy="8" r="4" fill="#4a6fe0"/></svg>
<div style="position:absolute;left:1813px;top:465px;width:85px;height:22px;background:#fff;border:1px solid #d2dceb"></div>
<div class="t" style="left:1845.1px;top:470.34px;font-size:12px;line-height:12px;color:#111;letter-spacing:-0.6px">0.0000</div>
<svg style="position:absolute;left:1883px;top:469px;" width="9" height="14" viewBox="0 0 9 14"><path d="M1 4.5L4.5 1L8 4.5M1 9.5L4.5 13L8 9.5" fill="none" stroke="#222" stroke-width="1.2"/></svg>
<div class="t" style="left:1424px;top:498.84px;font-size:12px;line-height:12px;color:#111;letter-spacing:-0.2px">Width [50 - 200] (100)</div>
<div style="position:absolute;left:1425px;top:526px;width:371px;height:4px;background:#c9d9ec;border-radius:2px"></div>
<svg style="position:absolute;left:1784px;top:520px;" width="16" height="16" viewBox="0 0 16 16"><circle cx="8" cy="8" r="7.2" fill="#fff" stroke="#a9b8cf" stroke-width="1"/><circle cx="8" cy="8" r="4" fill="#4a6fe0"/></svg>
<div style="position:absolute;left:1813px;top:517px;width:85px;height:22px;background:#fff;border:1px solid #d2dceb"></div>
<div class="t" style="left:1833.8px;top:522.34px;font-size:12px;line-height:12px;color:#111;letter-spacing:-0.6px">200.0000</div>
<svg style="position:absolute;left:1883px;top:521px;" width="9" height="14" viewBox="0 0 9 14"><path d="M1 4.5L4.5 1L8 4.5M1 9.5L4.5 13L8 9.5" fill="none" stroke="#222" stroke-width="1.2"/></svg>
<div style="position:absolute;left:1408px;top:547px;width:506px;height:6px;background:#cfd3de"></div>
<div class="t" style="left:1413px;top:557.84px;font-size:12px;line-height:12px;color:#1a1a1a;">Glyph Properties (#10 hyphen)</div>
<svg style="position:absolute;left:1582px;top:561px;" width="294" height="6" viewBox="0 0 294 6"><defs><pattern id="dp5" width="4" height="6" patternUnits="userSpaceOnUse"><rect x="0" y="0" width="1" height="1" fill="#9e9ea8"/><rect x="2" y="4" width="1" height="1" fill="#9e9ea8"/></pattern></defs><rect width="294" height="6" fill="url(#dp5)"/></svg>
<svg style="position:absolute;left:1884px;top:558px;" width="8" height="12" viewBox="0 0 8 12"><path d="M1 0H6V6H1Z M2.2 1.2V5.5H4.8V1.2Z" fill="#000" fill-rule="evenodd"/><rect x="0" y="5.6" width="7" height="1.4" fill="#000"/><rect x="3" y="7" width="1.1" height="4.5" fill="#000"/></svg>
<svg style="position:absolute;left:1897.5px;top:558px;" width="11" height="10" viewBox="0 0 11 10"><path d="M1 1L10 9M10 1L1 9" stroke="#000" stroke-width="1.9"/></svg>
<div style="position:absolute;left:1408px;top:574px;width:506px;height:370px;background:#f5f5f6"></div>
<div style="position:absolute;left:1408px;top:944px;width:506px;height:65px;background:#edf4fc"></div>
<div class="t" style="left:1416px;top:585.84px;font-size:12px;line-height:12px;color:#111;">Name</div>
<div style="position:absolute;left:1492px;top:582px;width:391px;height:23px;background:#fff;border:1px solid #c7d5e8"></div>
<div class="t" style="left:1496px;top:587.34px;font-size:12px;line-height:12px;color:#111;">hyphen</div>
<div class="t" style="left:1416px;top:613.84px;font-size:12px;line-height:12px;color:#111;">Code-points</div>
<div style="position:absolute;left:1492px;top:611px;width:364px;height:22px;background:#fff;border:1px solid #c7d5e8"></div>
<div class="t" style="left:1496px;top:616.34px;font-size:12px;line-height:12px;color:#111;">$2D</div>
<div class="t" style="left:1416px;top:641.84px;font-size:12px;line-height:12px;color:#111;">hyphen - Hyphen-minus</div>
<div class="t" style="left:1416px;top:669.84px;font-size:12px;line-height:12px;color:#111;">OT Class</div>
<div style="position:absolute;left:1492px;top:666px;width:90px;height:23px;background:#fff;border:1px solid #c7d5e8"></div>
<div class="t" style="left:1497px;top:671.34px;font-size:12px;line-height:12px;color:#111;">Automatic</div>
<svg style="position:absolute;left:1565px;top:674px;" width="10" height="6" viewBox="0 0 10 6"><path d="M1 1L5 5L9 1" fill="none" stroke="#6b7a90" stroke-width="1.1"/></svg>
<div class="t" style="left:1644px;top:669.84px;font-size:12px;line-height:12px;color:#111;">Unassigned</div>
<div class="t" style="left:1416px;top:697.84px;font-size:12px;line-height:12px;color:#111;">LSB</div>
<div class="t" style="left:1451px;top:697.84px;font-size:12px;line-height:12px;color:#111;">30</div>
<div style="position:absolute;left:1492px;top:695px;width:418px;height:22px;background:#fff;border:1px solid #c7d5e8"></div>
<div class="t" style="left:1496px;top:700.34px;font-size:12px;line-height:12px;color:#111;">30</div>
<div class="t" style="left:1416px;top:725.84px;font-size:12px;line-height:12px;color:#111;">RSB</div>
<div class="t" style="left:1451px;top:725.84px;font-size:12px;line-height:12px;color:#111;">30</div>
<div style="position:absolute;left:1492px;top:723px;width:418px;height:22px;background:#fff;border:1px solid #c7d5e8"></div>
<div class="t" style="left:1496px;top:728.34px;font-size:12px;line-height:12px;color:#111;">30</div>
<div class="t" style="left:1416px;top:753.84px;font-size:12px;line-height:12px;color:#111;">AW</div>
<div class="t" style="left:1451px;top:753.84px;font-size:12px;line-height:12px;color:#111;">652</div>
<div style="position:absolute;left:1492px;top:751px;width:418px;height:22px;background:#fff;border:1px solid #c7d5e8"></div>
<div class="t" style="left:1496px;top:756.34px;font-size:12px;line-height:12px;color:#111;">652</div>
<div class="t" style="left:1416px;top:781.84px;font-size:12px;line-height:12px;color:#111;">Tag</div>
<div style="position:absolute;left:1492px;top:779px;width:207px;height:22px;background:#fff;border:1px solid #c7d5e8"></div>
<div class="t" style="left:1497px;top:784.34px;font-size:12px;line-height:12px;color:#111;">No Glyph Tag</div>
<svg style="position:absolute;left:1682px;top:787px;" width="10" height="6" viewBox="0 0 10 6"><path d="M1 1L5 5L9 1" fill="none" stroke="#6b7a90" stroke-width="1.1"/></svg>
<div style="position:absolute;left:1703px;top:779px;width:207px;height:22px;background:#fff;border:1px solid #c7d5e8"></div>
<div class="t" style="left:1708px;top:784.34px;font-size:12px;line-height:12px;color:#111;">No Layer Tag</div>
<svg style="position:absolute;left:1893px;top:787px;" width="10" height="6" viewBox="0 0 10 6"><path d="M1 1L5 5L9 1" fill="none" stroke="#6b7a90" stroke-width="1.1"/></svg>
<div class="t" style="left:1416px;top:809.84px;font-size:12px;line-height:12px;color:#111;">Note</div>
<div style="position:absolute;left:1492px;top:806px;width:418px;height:131px;background:#edf3fb;border:1px solid #c7d5e8"></div>
<div style="position:absolute;left:1495px;top:809px;width:387px;height:100px;background:#fff"></div>
<svg style="position:absolute;left:1889px;top:815px;" width="9" height="6" viewBox="0 0 9 6"><path d="M0 6L4.5 0L9 6Z" fill="#b4c0d4"/></svg>
<svg style="position:absolute;left:1889px;top:892px;" width="9" height="6" viewBox="0 0 9 6"><path d="M0 0L4.5 6L9 0Z" fill="#b4c0d4"/></svg>
<svg style="position:absolute;left:1503px;top:916px;" width="6" height="9" viewBox="0 0 6 9"><path d="M6 0L0 4.5L6 9Z" fill="#b4c0d4"/></svg>
<svg style="position:absolute;left:1865px;top:916px;" width="6" height="9" viewBox="0 0 6 9"><path d="M0 0L6 4.5L0 9Z" fill="#b4c0d4"/></svg>
<div style="position:absolute;left:1403px;top:216px;width:4px;height:793px;background:linear-gradient(90deg,#e8e8ee,#d8d8e2 50%,#e8e8ee)"></div>
<div style="position:absolute;left:0px;top:1014px;width:1920px;height:26px;background:#edf3fb"></div>
<div class="t" style="left:6px;top:1021.34px;font-size:12px;line-height:12px;color:#111;letter-spacing:-0.6px">(742,481)</div>
<div style="position:absolute;left:644px;top:1019px;width:1px;height:17px;background:#b8c4d6"></div>
<div class="t" style="left:652px;top:1021.34px;font-size:12px;line-height:12px;color:#111;">hyphen --&gt;</div>
<div class="t" style="left:722px;top:1021.34px;font-size:12px;line-height:12px;color:#111;">1 contour, 18 nodes</div>
<div style="position:absolute;left:1779px;top:1019px;width:1px;height:17px;background:#b8c4d6"></div>
<div class="t" style="left:1834px;top:1021.34px;font-size:12px;line-height:12px;color:#111;">Contour mode</div>
<div style="position:absolute;left:0;top:1040px;width:1928px;height:8px;background:linear-gradient(90deg,#243a38 0%,#2a3d3a 20%,#3b4541 40%,#4a4a40 48%,#30301f 55%,#2c2f22 70%,#243a38 90%,#22383a 100%)"></div>
<div style="position:absolute;left:48px;top:1040px;width:288px;height:8px;background:#ebebeb"></div>
<div style="position:absolute;left:925px;top:1040px;width:50px;height:8px;background:#5e5e52"></div>
<svg style="position:absolute;left:282px;top:1042px;" width="30" height="6" viewBox="0 0 30 6"><path d="M4 6L9 1L14 6Z" fill="#7ec0ee"/><path d="M18 6L27 1L24 6Z" fill="#7ec0ee"/></svg>
<div class="t" style="left:1862px;top:1045.34px;font-size:12px;line-height:12px;color:#fff;">11:14 PM</div>
<div style="position:absolute;left:1920px;top:1020px;width:8px;height:28px;background:#263a3a"></div>
<div style="position:absolute;left:4px;top:38px;width:2px;height:15px;background-image:linear-gradient(#7f93b8 50%,transparent 50%);background-size:2px 4px"></div>
<div style="position:absolute;left:4px;top:66px;width:2px;height:18px;background-image:linear-gradient(#7f93b8 50%,transparent 50%);background-size:2px 4px"></div>
<svg style="position:absolute;left:13px;top:63px;" width="22" height="22" viewBox="0 0 22 22"><path d="M1.5 7V21.5H13M17.5 12V5.8L12 0.5H7" fill="#fff" stroke="#6b6b6b" stroke-width="1.1"/><path d="M1.5 7V21.5H17.5V5.8L12 0.5H1.5Z" fill="#fff"/><path d="M1.5 8V21.5H12M17.5 12.5V5.8L12 0.5H7" fill="none" stroke="#6b6b6b" stroke-width="1.1"/><path d="M12 0.5V5.8H17.5" fill="none" stroke="#6b6b6b" stroke-width="1.1"/><circle cx="2" cy="2.8" r="2.6" fill="none" stroke="#f0c050" stroke-width="2"/><path d="M2 -2V7.6M-2.8 2.8H6.8M-1.4 -0.6L5.4 6.2M5.4 -0.6L-1.4 6.2" stroke="#f0c050" stroke-width="1.5"/><circle cx="2" cy="2.8" r="1.2" fill="#fff"/><rect x="12" y="13" width="10" height="10" fill="#3d7dc6"/><path d="M15.3 21.5V15H19.8M15.3 18H19" stroke="#fff" stroke-width="2" fill="none"/></svg>
<svg style="position:absolute;left:43px;top:63px;" width="22" height="22" viewBox="0 0 22 22"><path d="M0.8 20V5.5H6.5L8.5 3.3H17.5V9" fill="#fff" stroke="#efbf5e" stroke-width="1.3"/><path d="M0.8 20L4.5 9.2H21.5L18 20Z" fill="#efbf5e"/><path d="M9.5 18C11.5 12.5 17 12 19.5 15.5" fill="none" stroke="#fff" stroke-width="4"/><path d="M9.5 18C11.5 12.5 17 12 19.5 15.5" fill="none" stroke="#3d7dc6" stroke-width="2.2"/><path d="M16 17.5L22 19.5L21.5 13Z" fill="#3d7dc6"/></svg>
<svg style="position:absolute;left:74px;top:63px;" width="22" height="22" viewBox="0 0 22 22"><path d="M0.7 3.5V21.2H21.4V7" fill="#fff" stroke="#6b6b6b" stroke-width="1.1"/><path d="M0.2 3.3H14.5L16.5 6.8H0.2Z" fill="#6b6b6b"/><text x="2.3" y="18.8" font-family="Liberation Sans" font-size="13" fill="#333">Aa</text><path d="M12.8 3.2C14.5 -0.2 19 -0.5 21 3.2" fill="none" stroke="#fff" stroke-width="3.6"/><path d="M12.8 3.2C14.5 -0.2 19 -0.5 21 3.2" fill="none" stroke="#3d7dc6" stroke-width="2"/><path d="M18 4.5L23 6L22.5 0.5Z" fill="#3d7dc6"/></svg>
<svg style="position:absolute;left:105px;top:63px;" width="22" height="22" viewBox="0 0 22 22"><path d="M1 1H21V21H1Z" fill="#9a5cc0"/><rect x="4" y="3" width="14" height="9" fill="#fff"/><rect x="6" y="15" width="10" height="6" fill="#fff"/><rect x="8" y="16.5" width="2.5" height="4.5" fill="#9a5cc0"/></svg>
<svg style="position:absolute;left:136px;top:63px;" width="22" height="22" viewBox="0 0 22 22"><path d="M0.5 14V0.5H16" fill="none" stroke="#b8b8b8"/><path d="M2.5 16V2.5H18" fill="none" stroke="#b8b8b8"/><path d="M5 5H21V21H5Z" fill="#b8b8b8"/><rect x="7" y="7" width="12" height="6" fill="#fff"/><rect x="9" y="15" width="8" height="6" fill="#fff"/><rect x="10.5" y="16" width="2" height="5" fill="#b8b8b8"/></svg>
<svg style="position:absolute;left:168px;top:63px;" width="22" height="22" viewBox="0 0 22 22"><path d="M1 1H19V21H1Z" fill="#9a5cc0"/><rect x="3" y="3" width="14" height="8" fill="#fff"/><rect x="5" y="14" width="8" height="7" fill="#fff"/><rect x="6.5" y="15.5" width="2" height="5.5" fill="#9a5cc0"/><rect x="13" y="13" width="10" height="10" fill="#3d7dc6"/><path d="M16 21.5V14.8H20.5M16 18H19.5" stroke="#fff" stroke-width="1.6" fill="none"/></svg>
<svg style="position:absolute;left:212px;top:63px;" width="22" height="22" viewBox="0 0 22 22"><rect x="5.5" y="1.5" width="11" height="7" fill="#fff" stroke="#6b6b6b"/><rect x="1" y="7" width="20" height="9" rx="1.5" fill="#6b6b6b"/><rect x="5" y="7" width="12" height="2" fill="#3d7dc6"/><rect x="5.5" y="13.5" width="11" height="7" fill="#fff" stroke="#6b6b6b"/><path d="M7 16.5H15M7 18.5H15" stroke="#3d7dc6"/><rect x="17" y="11" width="2" height="1.5" fill="#fff"/></svg>
<svg style="position:absolute;left:249px;top:63px;" width="22" height="22" viewBox="0 0 22 22"><path d="M3 3H8V7H9V10H10V21H1V10H2V7H3Z" fill="#6b6b6b"/><path d="M12 10H13V7H14V3H19V7H20V10H21V21H12Z" fill="#6b6b6b"/><rect x="9" y="10" width="4" height="5" fill="#6b6b6b"/><rect x="3" y="12" width="1.5" height="7" fill="#fff"/><rect x="14" y="12" width="1.5" height="7" fill="#fff"/><rect x="4" y="4" width="1.2" height="2.5" fill="#fff"/><rect x="15" y="4" width="1.2" height="2.5" fill="#fff"/></svg>
<svg style="position:absolute;left:285px;top:63px;" width="22" height="22" viewBox="0 0 22 22"><circle cx="5.5" cy="16.5" r="3.8" fill="none" stroke="#b8b8b8" stroke-width="1.6"/><circle cx="16.5" cy="16.5" r="3.8" fill="none" stroke="#b8b8b8" stroke-width="1.6"/><path d="M7.5 13.5L17 1M14.5 13.5L5 1" stroke="#b8b8b8" stroke-width="1.8"/></svg>
<svg style="position:absolute;left:317px;top:63px;" width="22" height="22" viewBox="0 0 22 22"><path d="M1.5 1.5H7.5L11.5 5.5V14.5H1.5Z" fill="#fff" stroke="#b8b8b8"/><path d="M7.5 1.5V5.5H11.5" fill="none" stroke="#b8b8b8"/><path d="M3 6.5H8M3 9.5H8M3 12H7" stroke="#c4c4c4"/><path d="M10.5 7.5H16.5L20.5 11.5V21.5H10.5Z" fill="#fff" stroke="#b8b8b8"/><path d="M16.5 7.5V11.5H20.5" fill="none" stroke="#b8b8b8"/><path d="M12 13.5H18M12 16.5H18M12 19H18" stroke="#c4c4c4"/></svg>
<svg style="position:absolute;left:348px;top:63px;" width="22" height="22" viewBox="0 0 22 22"><rect x="1" y="4" width="9" height="17" fill="#efbf5e"/><rect x="4" y="1" width="6" height="4" fill="#6b6b6b"/><rect x="3" y="4" width="10" height="2" fill="#6b6b6b"/><path d="M10.5 6.5H17.5L21.5 10.5V21.5H10.5Z" fill="#fff" stroke="#6b6b6b"/><path d="M17.5 6.5V10.5H21.5" fill="none" stroke="#6b6b6b"/></svg>
<svg style="position:absolute;left:385px;top:63px;" width="22" height="22" viewBox="0 0 22 22"><path d="M6 7H13C17 7 19 10 19 13C19 17 16 19 13 19" fill="none" stroke="#3d7dc6" stroke-width="2.4"/><path d="M1 7L7.5 1.5V12.5Z" fill="#3d7dc6"/></svg>
<svg style="position:absolute;left:428px;top:63px;" width="22" height="22" viewBox="0 0 22 22"><path d="M16 7H9C5 7 3 10 3 13C3 17 6 19 9 19" fill="none" stroke="#b8b8b8" stroke-width="2.4"/><path d="M21 7L14.5 1.5V12.5Z" fill="#b8b8b8"/></svg>
<svg style="position:absolute;left:481px;top:63px;" width="22" height="22" viewBox="0 0 22 22"><path d="M5.5 1.5H19.5V22.5H5.5Z" fill="#f6f8fb" stroke="#b8b8b8"/><path d="M5 0V9M0.5 4.5H9.5" stroke="#b8b8b8" stroke-width="2.4"/><text x="8" y="19" font-family="Liberation Sans" font-weight="bold" font-size="12.5" fill="#b0b0b0">C</text></svg>
<svg style="position:absolute;left:511px;top:63px;" width="22" height="22" viewBox="0 0 22 22"><path d="M5.5 1.5H19.5V22.5H5.5Z" fill="#f6f8fb" stroke="#b8b8b8"/><path d="M5 0V9M0.5 4.5H9.5" stroke="#b8b8b8" stroke-width="2.4"/><text x="8" y="19" font-family="Liberation Sans" font-weight="bold" font-size="12.5" fill="#b0b0b0">G</text></svg>
<svg style="position:absolute;left:550px;top:63px;" width="22" height="22" viewBox="0 0 22 22"><rect x="1.5" y="7" width="11" height="8.5" rx="4.25" fill="none" stroke="#3d7dc6" stroke-width="2.8"/><rect x="9.5" y="7" width="11" height="8.5" rx="4.25" fill="none" stroke="#3d7dc6" stroke-width="2.8"/><path d="M9.2 7V9.5" stroke="#edf3fb" stroke-width="1.2"/><path d="M12.8 13V15.5" stroke="#edf3fb" stroke-width="1.2"/></svg>
<svg style="position:absolute;left:594px;top:63px;" width="22" height="22" viewBox="0 0 22 22"><path d="M8 6.2H5.7C3 6.2 1.2 8 1.2 10.7C1.2 13.4 3 15.2 5.7 15.2H8" fill="none" stroke="#3d7dc6" stroke-width="2.4"/><path d="M14 6.2H16.3C19 6.2 20.8 8 20.8 10.7C20.8 13.4 19 15.2 16.3 15.2H14" fill="none" stroke="#3d7dc6" stroke-width="2.4"/><path d="M11 0V4M11 17V21M5 1L7 4M17 1L15 4M5 20L7 17M17 20L15 17" stroke="#3d7dc6" stroke-width="1.2"/></svg>
<svg style="position:absolute;left:626px;top:63px;" width="22" height="22" viewBox="0 0 22 22"><text x="1" y="17" font-family="Liberation Serif" font-style="italic" font-size="19" fill="#222">fx</text></svg>
<svg style="position:absolute;left:657px;top:63px;" width="22" height="22" viewBox="0 0 22 22"><path d="M10 1L20 7L13 18L3 12Z" fill="#f07a92"/><path d="M3 12L13 18L11 21L1 15Z" fill="#e04a6a"/><path d="M9 20H21" stroke="#6b6b6b" stroke-width="1.6"/></svg>
<svg style="position:absolute;left:694px;top:63px;" width="22" height="22" viewBox="0 0 22 22"><rect x="1.5" y="1.5" width="19" height="15" fill="#fff" stroke="#6b6b6b"/><text x="5" y="13" font-family="Liberation Sans" font-weight="bold" font-size="12" fill="#6b6b6b">P</text><circle cx="17" cy="17" r="4.2" fill="#6b6b6b"/><circle cx="17" cy="17" r="1.6" fill="#fff"/><path d="M17 11.5V22.5M11.5 17H22.5M13.2 13.2L20.8 20.8M20.8 13.2L13.2 20.8" stroke="#6b6b6b" stroke-width="1.4"/></svg>
<svg style="position:absolute;left:725px;top:63px;" width="22" height="22" viewBox="0 0 22 22"><rect x="1.5" y="1.5" width="19" height="18" fill="#fff" stroke="#6b6b6b"/><rect x="1" y="1" width="20" height="3" fill="#6b6b6b"/><path d="M4 8H18M4 11H18M4 14H10" stroke="#999" stroke-dasharray="2 1"/><path d="M1 13H7V21H1Z" fill="#fff" stroke="#e8842a" stroke-width="1.5"/><path d="M11 20L19 12L21 14L13 22Z" fill="#3d7dc6"/></svg>
<svg style="position:absolute;left:756px;top:63px;" width="22" height="22" viewBox="0 0 22 22"><rect x="1.5" y="1.5" width="10" height="11" fill="#fff" stroke="#6b6b6b"/><text x="3" y="10" font-family="Liberation Sans" font-size="10" fill="#222">T</text><rect x="9.5" y="9.5" width="12" height="12" fill="#fff" stroke="#6b6b6b"/><text x="11.5" y="20" font-family="Liberation Sans" font-weight="bold" font-size="12" fill="#111">T</text><path d="M2 14C2 18 4 19 8 19" fill="none" stroke="#3d7dc6" stroke-width="1.8"/><path d="M7 16V22L10 19Z" fill="#3d7dc6"/></svg>
<svg style="position:absolute;left:787px;top:63px;" width="22" height="22" viewBox="0 0 22 22"><rect x="1.5" y="1.5" width="19" height="19" fill="#fff" stroke="#6b6b6b"/><rect x="1" y="1" width="20" height="3" fill="#3d7dc6"/><path d="M5 11L9 15L17 7" fill="none" stroke="#3d7dc6" stroke-width="2.6"/></svg>
<svg style="position:absolute;left:823px;top:63px;" width="22" height="22" viewBox="0 0 22 22"><path d="M1.5 1.5H18.5V20.5H1.5Z" fill="#fff" stroke="#6b6b6b" stroke-dasharray="19 0"/><text x="3" y="9" font-family="Liberation Sans" font-size="9" fill="#3d7dc6">abc</text><path d="M3 12H8M10 12H14M3 15H6M8 15H12M3 18H9" stroke="#3d7dc6" stroke-width="1"/><circle cx="15" cy="15" r="3.8" fill="#fff" stroke="#6b6b6b" stroke-width="1.8"/><path d="M17.5 17.5L21 21" stroke="#6b6b6b" stroke-width="2.2"/></svg>
<svg style="position:absolute;left:855px;top:63px;" width="22" height="22" viewBox="0 0 22 22"><path d="M1.5 1.5H18.5V20.5H1.5Z" fill="#fff" stroke="#6b6b6b" stroke-dasharray="19 0"/><text x="3" y="9" font-family="Liberation Sans" font-size="9" fill="#3d7dc6">abc</text><path d="M3 12H8M10 12H14M3 15H6M8 15H12M3 18H9" stroke="#3d7dc6" stroke-width="1"/><circle cx="16.5" cy="16.5" r="5" fill="#fff" stroke="#3d7dc6" stroke-width="1.4"/><path d="M11.5 16.5H21.5M16.5 11.5V21.5M14 13C15 15 15 18 14 20M19 13C18 15 18 18 19 20" stroke="#3d7dc6" stroke-width="1" fill="none"/></svg>
<svg style="position:absolute;left:886px;top:63px;" width="22" height="22" viewBox="0 0 22 22"><rect x="1.5" y="2.5" width="18" height="12" fill="#fff" stroke="#3d7dc6" stroke-width="2"/><rect x="4" y="17" width="10" height="2.5" fill="#3d7dc6"/><circle cx="17" cy="17" r="5" fill="#3d7dc6"/><path d="M17 20V14M14.5 16.5L17 14L19.5 16.5" fill="none" stroke="#fff" stroke-width="1.6"/></svg>
<svg style="position:absolute;left:927px;top:63px;" width="22" height="22" viewBox="0 0 22 22"><path d="M3.5 1.5H13.5L18.5 6.5V21.5H3.5Z" fill="#f6f8fb" stroke="#b8b8b8"/><path d="M13.5 1.5V6.5H18.5" fill="none" stroke="#b8b8b8"/><rect x="5" y="3" width="5" height="3" fill="#d4d8de"/></svg>
<svg style="position:absolute;left:966px;top:63px;" width="22" height="22" viewBox="0 0 22 22"><rect x="0.5" y="1.5" width="21" height="18" fill="#fff" stroke="#b8b8b8"/><rect x="0" y="1" width="22" height="3" fill="#b8b8b8"/><path d="M6 7V17M3 14L6 17L9 14M15 17V7M12 10L15 7L18 10" fill="none" stroke="#999" stroke-width="1.2"/></svg>
<svg style="position:absolute;left:1006px;top:63px;" width="22" height="22" viewBox="0 0 22 22"><path d="M2.5 1.5H12.5L17.5 6.5V21.5H2.5Z" fill="#f6f8fb" stroke="#b8b8b8"/><path d="M12.5 1.5V6.5H17.5" fill="none" stroke="#b8b8b8"/><path d="M10.5 15.5L13 12.5H21.5V20.5H13Z" fill="#fff" stroke="#b8b8b8"/><path d="M14 15H20M14 17.5H20" stroke="#b8b8b8"/></svg>
<div style="position:absolute;left:204px;top:62px;width:1px;height:25px;background:#a9bdd8"></div>
<div style="position:absolute;left:241px;top:62px;width:1px;height:25px;background:#a9bdd8"></div>
<div style="position:absolute;left:278px;top:62px;width:1px;height:25px;background:#a9bdd8"></div>
<div style="position:absolute;left:377px;top:62px;width:1px;height:25px;background:#a9bdd8"></div>
<div style="position:absolute;left:543px;top:62px;width:1px;height:25px;background:#a9bdd8"></div>
<div style="position:absolute;left:686px;top:62px;width:1px;height:25px;background:#a9bdd8"></div>
<div style="position:absolute;left:816px;top:62px;width:1px;height:25px;background:#a9bdd8"></div>
<div style="position:absolute;left:475px;top:66px;width:2px;height:18px;background-image:linear-gradient(#7f93b8 50%,transparent 50%);background-size:2px 4px"></div>
<div style="position:absolute;left:919px;top:66px;width:2px;height:18px;background-image:linear-gradient(#7f93b8 50%,transparent 50%);background-size:2px 4px"></div>
<svg style="position:absolute;left:191px;top:72px;" width="7" height="4" viewBox="0 0 7 4"><path d="M0 0H7L3.5 4Z" fill="#111"/></svg>
<svg style="position:absolute;left:415px;top:72px;" width="7" height="4" viewBox="0 0 7 4"><path d="M0 0H7L3.5 4Z" fill="#8fa3c4"/></svg>
<svg style="position:absolute;left:459px;top:72px;" width="7" height="4" viewBox="0 0 7 4"><path d="M0 0H7L3.5 4Z" fill="#c4cfe0"/></svg>
<svg style="position:absolute;left:581px;top:72px;" width="7" height="4" viewBox="0 0 7 4"><path d="M0 0H7L3.5 4Z" fill="#8fa3c4"/></svg>
<svg style="position:absolute;left:952px;top:72px;" width="7" height="4" viewBox="0 0 7 4"><path d="M0 0H7L3.5 4Z" fill="#666"/></svg>
<svg style="position:absolute;left:990px;top:72px;" width="7" height="4" viewBox="0 0 7 4"><path d="M0 0H7L3.5 4Z" fill="#666"/></svg>
<svg style="position:absolute;left:1030px;top:72px;" width="7" height="4" viewBox="0 0 7 4"><path d="M0 0H7L3.5 4Z" fill="#666"/></svg>
<div style="position:absolute;left:4px;top:100px;width:2px;height:17px;background-image:linear-gradient(#7f93b8 50%,transparent 50%);background-size:2px 4px"></div>
<div style="position:absolute;left:8px;top:93px;width:31px;height:30px;background:#c9d6e9;border-radius:3px"></div>
<div style="position:absolute;left:270px;top:93px;width:39px;height:30px;background:#c9d6e9;border-radius:3px"></div>
<div style="position:absolute;left:488px;top:93px;width:31px;height:30px;background:#c9d6e9;border-radius:3px"></div>
<div style="position:absolute;left:556px;top:93px;width:31px;height:30px;background:#c9d6e9;border-radius:3px"></div>
<svg style="position:absolute;left:12px;top:97px;" width="22" height="22" viewBox="0 0 22 22"><rect x="2.5" y="4.5" width="17" height="13" fill="none" stroke="#555" stroke-dasharray="2 1.5"/></svg>
<svg style="position:absolute;left:74px;top:97px;" width="22" height="22" viewBox="0 0 22 22"><path d="M4 16.5C2.5 14 2 12 3 10.5C4 9.5 5.5 10 6.5 11.5V5.5C6.5 3.5 8 2.5 9.5 2.5C10.5 1.8 12.5 1.8 13.5 2.5C15 2.5 16 3 16.5 4C18 4 19.5 5 19.5 7V14C19.5 18 17 21 12.5 21C9 21 6 19.5 4 16.5Z" fill="#fff" stroke="#6b6b6b" stroke-width="1.3"/><path d="M9.5 4.5V11M13 3.5V10.5M16.5 5V11" stroke="#999" stroke-width="0.9"/></svg>
<svg style="position:absolute;left:106px;top:97px;" width="22" height="22" viewBox="0 0 22 22"><text x="2" y="19" font-family="Liberation Serif" font-weight="bold" font-size="21" fill="#5c5c5c">T</text></svg>
<svg style="position:absolute;left:136px;top:97px;" width="22" height="22" viewBox="0 0 22 22"><path d="M2 4V10M20 4V10M3 7H19" stroke="#3d7dc6" stroke-width="1.2"/><path d="M3 7L6 5V9ZM19 7L16 5V9Z" fill="#3d7dc6"/><rect x="1.5" y="12.5" width="19" height="6" fill="#fff8e0" stroke="#efbf5e"/><path d="M4 13V16M7 13V15M10 13V16M13 13V15M16 13V16" stroke="#efbf5e"/></svg>
<svg style="position:absolute;left:167px;top:97px;" width="22" height="22" viewBox="0 0 22 22"><path d="M6 15L16.5 2.5C17.5 1.5 19.5 1.5 20.5 2.5C21.5 3.5 21.5 5.5 20.5 6.5L10 19Z" fill="#3d7dc6"/><path d="M10.5 12L12 10.5M13 9L14.5 7.5M15.5 6L17 4.5" stroke="#fff" stroke-width="1.1"/><path d="M6 15L10 19L7 21L0 21Z" fill="#6b6b6b"/></svg>
<svg style="position:absolute;left:198px;top:97px;" width="22" height="22" viewBox="0 0 22 22"><path d="M3 12L11 4L19 12L11 20Z" fill="none" stroke="#b8b8b8" stroke-width="1.6"/><path d="M8 2C8 0 11 0 11 2V9" fill="none" stroke="#b8b8b8" stroke-width="1.4"/><circle cx="11" cy="9.5" r="1.3" fill="#b8b8b8"/><path d="M19 12C21 14 21 17 19.5 19" stroke="#b8b8b8" stroke-width="2" fill="none"/></svg>
<svg style="position:absolute;left:235px;top:97px;" width="22" height="22" viewBox="0 0 22 22"><rect x="1.5" y="1.5" width="20" height="19" fill="#fff" stroke="#6b6b6b"/><circle cx="17" cy="5.5" r="3" fill="#efbf5e"/><path d="M3 20L9 11L14 20Z" fill="#3d7dc6"/><circle cx="14" cy="15" r="4" fill="#fff" stroke="#6b6b6b" stroke-width="1.6"/><path d="M12 15H16" stroke="#3d7dc6" stroke-width="1.6"/><path d="M17 18L21 22" stroke="#6b6b6b" stroke-width="2"/></svg>
<svg style="position:absolute;left:273px;top:97px;" width="22" height="22" viewBox="0 0 22 22"><path d="M1 1H18L1 18Z" fill="#6b6b6b"/><path d="M2.5 21L21 2.5" stroke="#6b6b6b" stroke-width="1.4"/><path d="M20.5 6.5V20.5H6.5Z" fill="#fff" stroke="#6b6b6b" stroke-width="1.2"/></svg>
<svg style="position:absolute;left:314px;top:97px;" width="22" height="22" viewBox="0 0 22 22"><rect x="1.5" y="2.5" width="17" height="16" fill="#fff" stroke="#6b6b6b" stroke-width="1"/><path d="M3.5 18L9.5 3.5H11L17 18M6 13H14.5" fill="none" stroke="#4a4a4a" stroke-width="2.3"/><circle cx="16.5" cy="4.5" r="3" fill="#3d7dc6"/><circle cx="19" cy="13.5" r="3" fill="#6aa88a"/><circle cx="11" cy="19.5" r="3" fill="#ef8a3a"/></svg>
<svg style="position:absolute;left:358px;top:97px;" width="22" height="22" viewBox="0 0 22 22"><circle cx="8.5" cy="8.5" r="6.8" fill="#fff" stroke="#6b6b6b" stroke-width="2"/><path d="M5 8.5H12" stroke="#3d7dc6" stroke-width="2.4"/><path d="M8.5 5V12" stroke="#3d7dc6" stroke-width="2.4"/><path d="M13.5 13.5L20.5 20.5" stroke="#6b6b6b" stroke-width="3"/></svg>
<svg style="position:absolute;left:389px;top:97px;" width="22" height="22" viewBox="0 0 22 22"><circle cx="8.5" cy="8.5" r="6.8" fill="#fff" stroke="#6b6b6b" stroke-width="2"/><path d="M5 8.5H12" stroke="#3d7dc6" stroke-width="2.4"/><path d="M13.5 13.5L20.5 20.5" stroke="#6b6b6b" stroke-width="3"/></svg>
<svg style="position:absolute;left:492px;top:97px;" width="22" height="22" viewBox="0 0 22 22"><path d="M0.6 6.5V0.6H7M15 0.6H21.4V6.5M21.4 15V21.4H15M7 21.4H0.6V15" fill="none" stroke="#6b6b6b" stroke-width="1.2"/><rect x="8.6" y="8.6" width="4.8" height="4.8" fill="#fff" stroke="#6b6b6b" stroke-width="1.1"/><path d="M11 1.5L7.8 4.8H10V7H12V4.8H14.2ZM11 20.5L7.8 17.2H10V15H12V17.2H14.2ZM1.5 11L4.8 7.8V10H7V12H4.8V14.2ZM20.5 11L17.2 7.8V10H15V12H17.2V14.2Z" fill="#3d7dc6"/></svg>
<svg style="position:absolute;left:522px;top:97px;" width="22" height="22" viewBox="0 0 22 22"><rect x="1.5" y="2.5" width="19" height="15" fill="none" stroke="#bbb" stroke-dasharray="1.5 1.5"/><circle cx="13" cy="13" r="4.5" fill="#fff" stroke="#b8b8b8" stroke-width="1.8"/><path d="M16 16L20 20" stroke="#b8b8b8" stroke-width="2.2"/></svg>
<svg style="position:absolute;left:560px;top:97px;" width="22" height="22" viewBox="0 0 22 22"><path d="M2 2H20V20Z" fill="#6b6b6b"/></svg>
<svg style="position:absolute;left:592px;top:97px;" width="22" height="22" viewBox="0 0 22 22"><path d="M2 2H20V20Z" fill="#6b6b6b"/><rect x="0.5" y="0.5" width="3.5" height="3.5" fill="#fff" stroke="#6b6b6b"/><rect x="18" y="0.5" width="3.5" height="3.5" fill="#fff" stroke="#6b6b6b"/><rect x="18" y="18" width="3.5" height="3.5" fill="#fff" stroke="#6b6b6b"/></svg>
<svg style="position:absolute;left:627px;top:97px;" width="22" height="22" viewBox="0 0 22 22"><rect x="1.5" y="1.5" width="20" height="20" fill="#fff" stroke="#6b6b6b" stroke-width="1.1"/><circle cx="17" cy="5.5" r="2.8" fill="#efbf5e"/><path d="M2.5 19.5L9.5 11L15.5 19.5Z" fill="#3d7dc6"/><path d="M14.5 13.5L16.5 12L20.5 19.5H17.5Z" fill="#3d7dc6"/><path d="M4.5 -1.5V8.5M-0.5 3.5H9.5" stroke="#5f9f88" stroke-width="2.6"/></svg>
<svg style="position:absolute;left:659px;top:97px;" width="22" height="22" viewBox="0 0 22 22"><path d="M11 12L19 3L21 5L13 14Z" fill="#6b6b6b"/><path d="M3 19C3 15 7 12 11 13L12 15C10 19 7 20 3 19Z" fill="#3d7dc6"/><path d="M13 17H17V21H10" fill="none" stroke="#6b6b6b" stroke-width="2"/></svg>
<svg style="position:absolute;left:690px;top:97px;" width="22" height="22" viewBox="0 0 22 22"><path d="M4 16L16 3L19 6L7 19L2 20Z" fill="#9a5cc0"/><path d="M1 21H14" stroke="#3d7dc6" stroke-width="1"/><rect x="16" y="13" width="2.5" height="3" fill="#6b6b6b"/><rect x="16" y="18" width="2.5" height="3" fill="#6b6b6b"/></svg>
<svg style="position:absolute;left:720px;top:97px;" width="22" height="22" viewBox="0 0 22 22"><rect x="1" y="4" width="21" height="14" fill="#6b6b6b"/></svg>
<svg style="position:absolute;left:752px;top:97px;" width="22" height="22" viewBox="0 0 22 22"><ellipse cx="11" cy="11" rx="10.5" ry="7" fill="#6b6b6b"/></svg>
<svg style="position:absolute;left:789px;top:97px;" width="22" height="22" viewBox="0 0 22 22"><circle cx="11" cy="11" r="10" fill="none" stroke="#3d7dc6" stroke-width="1.6"/><path d="M5 11H17M10 6L5 11L10 16" fill="none" stroke="#3d7dc6" stroke-width="2"/></svg>
<svg style="position:absolute;left:820px;top:97px;" width="22" height="22" viewBox="0 0 22 22"><circle cx="11" cy="11" r="10" fill="none" stroke="#3d7dc6" stroke-width="1.6"/><path d="M5 11H17M12 6L17 11L12 16" fill="none" stroke="#3d7dc6" stroke-width="2"/></svg>
<div style="position:absolute;left:227px;top:95px;width:1px;height:26px;background:#a9bdd8"></div>
<div style="position:absolute;left:350px;top:95px;width:1px;height:26px;background:#a9bdd8"></div>
<div style="position:absolute;left:552px;top:95px;width:1px;height:26px;background:#a9bdd8"></div>
<div style="position:absolute;left:621px;top:95px;width:1px;height:26px;background:#a9bdd8"></div>
<div style="position:absolute;left:782px;top:95px;width:1px;height:26px;background:#a9bdd8"></div>
<svg style="position:absolute;left:259px;top:106px;" width="7" height="4" viewBox="0 0 7 4"><path d="M0 0H7L3.5 4Z" fill="#111"/></svg>
<svg style="position:absolute;left:298px;top:106px;" width="7" height="4" viewBox="0 0 7 4"><path d="M0 0H7L3.5 4Z" fill="#4a7fd0"/></svg>
<svg style="position:absolute;left:337px;top:106px;" width="7" height="4" viewBox="0 0 7 4"><path d="M0 0H7L3.5 4Z" fill="#111"/></svg>
<svg style="position:absolute;left:41px;top:93px;" width="26" height="27" viewBox="0 0 26 27"><path d="M6 25.5C7 21 13 20 16.5 19C19.5 18 21 16.5 20 15.5C23 12 23 5 17 3.8C11 2.5 4 4.5 4.2 9C4.4 12.5 9 12.5 12 11C15 9.5 18.5 11.5 20.3 15.5" fill="none" stroke="#6b6b6b" stroke-width="1.3"/><path d="M18.5 15L21 16.5L24 14.5" fill="none" stroke="#6b6b6b" stroke-width="1.2"/></svg>
<div style="position:absolute;left:417px;top:96px;width:71px;height:23px;background:#fff;border:1px solid #cfdaea"></div>
<div class="t" style="left:420px;top:103.19px;font-size:11px;line-height:11px;color:#111;">54.55%</div>
<svg style="position:absolute;left:468px;top:104px;" width="10" height="6" viewBox="0 0 10 6"><path d="M1 1L5 5L9 1" fill="none" stroke="#8a9ab0" stroke-width="1.1"/></svg>
<div style="position:absolute;left:4px;top:134px;width:2px;height:17px;background-image:linear-gradient(#7f93b8 50%,transparent 50%);background-size:2px 4px"></div>
<div style="position:absolute;left:746px;top:127px;width:62px;height:30px;background:#c9d6e9;border-radius:3px"></div>
<div style="position:absolute;left:839px;top:127px;width:31px;height:30px;background:#c9d6e9;border-radius:3px"></div>
<div style="position:absolute;left:901px;top:127px;width:31px;height:30px;background:#c9d6e9;border-radius:3px"></div>
<svg style="position:absolute;left:11px;top:131px;" width="22" height="22" viewBox="0 0 22 22"><path d="M2.5 7V1.5H7" fill="none" stroke="#b5b5b5"/><rect x="5" y="4" width="14" height="13" fill="#d6d6d6"/><path d="M14 21.5H20.5V15" fill="none" stroke="#b5b5b5"/></svg>
<svg style="position:absolute;left:42px;top:131px;" width="22" height="22" viewBox="0 0 22 22"><rect x="1.5" y="1.5" width="8" height="8" fill="#fff" stroke="#b5b5b5"/><rect x="5" y="5" width="9" height="9" fill="#d6d6d6"/><rect x="12.5" y="12.5" width="8" height="8" fill="#fff" stroke="#b5b5b5"/><rect x="9" y="9" width="6" height="6" fill="#d6d6d6"/></svg>
<svg style="position:absolute;left:76px;top:131px;" width="22" height="22" viewBox="0 0 22 22"><rect x="1" y="3" width="13" height="13" fill="#d6d6d6"/><path d="M10 21.5H18.5V12" fill="none" stroke="#b5b5b5"/></svg>
<svg style="position:absolute;left:107px;top:131px;" width="22" height="22" viewBox="0 0 22 22"><rect x="1" y="2" width="13" height="12" fill="#d6d6d6"/><rect x="7.5" y="9.5" width="13" height="12" fill="#fff" stroke="#b5b5b5"/></svg>
<svg style="position:absolute;left:142px;top:131px;" width="22" height="22" viewBox="0 0 22 22"><path d="M1.5 1V21" stroke="#b5b5b5"/><rect x="3.5" y="3.5" width="10" height="5" fill="#fff" stroke="#b5b5b5"/><rect x="10" y="11" width="11" height="10" fill="#d6d6d6"/><path d="M9 16H4M6 13.5L3.5 16L6 18.5" fill="none" stroke="#b5b5b5" stroke-width="1.4"/></svg>
<svg style="position:absolute;left:172px;top:131px;" width="22" height="22" viewBox="0 0 22 22"><path d="M11 0V22" stroke="#b5b5b5"/><rect x="7.5" y="4.5" width="7" height="5" fill="#fff" stroke="#b5b5b5"/><rect x="4" y="12" width="14" height="7" fill="#d6d6d6"/></svg>
<svg style="position:absolute;left:204px;top:131px;" width="22" height="22" viewBox="0 0 22 22"><path d="M20.5 1V21" stroke="#b5b5b5"/><rect x="8.5" y="3.5" width="10" height="5" fill="#fff" stroke="#b5b5b5"/><rect x="1" y="11" width="11" height="10" fill="#d6d6d6"/><path d="M13 16H18M16 13.5L18.5 16L16 18.5" fill="none" stroke="#b5b5b5" stroke-width="1.4"/></svg>
<svg style="position:absolute;left:240px;top:131px;" width="22" height="22" viewBox="0 0 22 22"><path d="M1 1.5H21" stroke="#b5b5b5"/><rect x="2.5" y="4.5" width="5" height="10" fill="#fff" stroke="#b5b5b5"/><rect x="10" y="10" width="10" height="11" fill="#d6d6d6"/><path d="M15 9V4M12.5 6.5L15 4L17.5 6.5" fill="none" stroke="#b5b5b5" stroke-width="1.4"/></svg>
<svg style="position:absolute;left:272px;top:131px;" width="22" height="22" viewBox="0 0 22 22"><path d="M0 11H22" stroke="#b5b5b5"/><rect x="3.5" y="7.5" width="5" height="7" fill="#fff" stroke="#b5b5b5"/><rect x="12" y="3" width="7" height="16" fill="#d6d6d6"/></svg>
<svg style="position:absolute;left:303px;top:131px;" width="22" height="22" viewBox="0 0 22 22"><path d="M1 20.5H21" stroke="#b5b5b5"/><rect x="2.5" y="8.5" width="5" height="10" fill="#fff" stroke="#b5b5b5"/><rect x="10" y="1" width="10" height="11" fill="#d6d6d6"/><path d="M15 13V18M12.5 15.5L15 18L17.5 15.5" fill="none" stroke="#b5b5b5" stroke-width="1.4"/></svg>
<svg style="position:absolute;left:340px;top:131px;" width="22" height="22" viewBox="0 0 22 22"><rect x="1.5" y="4.5" width="5" height="13" fill="#fff" stroke="#b5b5b5"/><rect x="8.5" y="1.5" width="6" height="20" fill="#f4f6fa" stroke="#b5b5b5"/><rect x="16.5" y="7.5" width="5" height="7" fill="#fff" stroke="#b5b5b5"/></svg>
<svg style="position:absolute;left:370px;top:131px;" width="22" height="22" viewBox="0 0 22 22"><path d="M0 11H22" stroke="#b5b5b5"/><rect x="5.5" y="1.5" width="11" height="5" fill="#fff" stroke="#b5b5b5"/><rect x="2" y="8" width="18" height="6" fill="#fff" stroke="#b5b5b5"/><rect x="4.5" y="15.5" width="13" height="5" fill="#fff" stroke="#b5b5b5"/></svg>
<svg style="position:absolute;left:410px;top:131px;" width="22" height="22" viewBox="0 0 22 22"><rect x="5.5" y="4.5" width="15" height="17" fill="#fff" stroke="#6b6b6b"/><text x="7.5" y="19" font-family="Liberation Sans" font-weight="bold" font-size="13" fill="#6b6b6b">G</text><rect x="1" y="1" width="7" height="5" rx="2.5" fill="none" stroke="#3d7dc6" stroke-width="1.8"/><rect x="6" y="1" width="7" height="5" rx="2.5" fill="none" stroke="#3d7dc6" stroke-width="1.8"/></svg>
<svg style="position:absolute;left:450px;top:131px;" width="22" height="22" viewBox="0 0 22 22"><path d="M6 4C2 6 1 10 2 14C4 19 9 21 13 20C18 19 21 14 20 9C19 6 18 5 16 4" fill="none" stroke="#b5b5b5" stroke-width="1.8"/><path d="M3 1L7 5L2 6Z" fill="#b5b5b5"/><path d="M19 1L15 5L20 6Z" fill="#b5b5b5"/><rect x="5.5" y="9.5" width="11" height="6" fill="#fff" stroke="#b5b5b5"/></svg>
<svg style="position:absolute;left:480px;top:131px;" width="22" height="22" viewBox="0 0 22 22"><path d="M5 0H21V4H19V19H21V23H15V19H17V4H9V7H5Z" fill="#3d7dc6"/><rect x="0.5" y="6.5" width="12" height="6" fill="#fff" stroke="#6b6b6b" stroke-width="1.4"/><rect x="12" y="8" width="5" height="3" fill="#3d7dc6"/></svg>
<svg style="position:absolute;left:517px;top:131px;" width="22" height="22" viewBox="0 0 22 22"><path d="M20 3L4 11H20Z" fill="#fff" stroke="#6b6b6b" stroke-width="1.2"/><path d="M20 13V21L4 13Z" fill="#6b6b6b"/></svg>
<svg style="position:absolute;left:548px;top:131px;" width="22" height="22" viewBox="0 0 22 22"><path d="M10 3V20H2Z" fill="#6b6b6b"/><path d="M12 3V20H20Z" fill="#fff" stroke="#6b6b6b" stroke-width="1.2"/></svg>
<svg style="position:absolute;left:579px;top:131px;" width="22" height="22" viewBox="0 0 22 22"><path d="M9 5V20H1Z" fill="#6b6b6b"/><path d="M11 8V20H21Z" fill="#fff" stroke="#6b6b6b" stroke-width="1.2"/><path d="M13 4C14 2 17 2 18 5" fill="none" stroke="#3d7dc6" stroke-width="1.4"/><path d="M11 2V6H15Z" fill="#3d7dc6"/></svg>
<svg style="position:absolute;left:610px;top:131px;" width="22" height="22" viewBox="0 0 22 22"><path d="M11 8V20H1Z" fill="#fff" stroke="#6b6b6b" stroke-width="1.2"/><path d="M13 5V20H21Z" fill="#6b6b6b"/><path d="M4 6C5 3 8 2 10 4" fill="none" stroke="#3d7dc6" stroke-width="1.4"/><path d="M11 1V6H7Z" fill="#3d7dc6"/></svg>
<svg style="position:absolute;left:647px;top:131px;" width="22" height="22" viewBox="0 0 22 22"><rect x="1" y="1" width="13" height="13" fill="#efbf5e" stroke="#c9a040" stroke-width="1"/><rect x="8" y="8" width="13" height="13" fill="#efbf5e" stroke="#c9a040"/><rect x="8" y="8" width="6" height="6" fill="#efbf5e" stroke="#c9a040"/></svg>
<svg style="position:absolute;left:678px;top:131px;" width="22" height="22" viewBox="0 0 22 22"><rect x="1.5" y="1.5" width="12" height="12" fill="#fff" stroke="#6b6b6b"/><rect x="8.5" y="8.5" width="12" height="12" fill="#fff" stroke="#6b6b6b"/><rect x="8.5" y="8.5" width="5" height="5" fill="#efbf5e"/></svg>
<svg style="position:absolute;left:709px;top:131px;" width="22" height="22" viewBox="0 0 22 22"><rect x="1" y="1" width="13" height="13" fill="#efbf5e"/><rect x="8" y="8" width="13" height="13" fill="#efbf5e"/><rect x="8.5" y="8.5" width="5" height="5" fill="#fff" stroke="#6b6b6b"/><rect x="1.5" y="1.5" width="12" height="12" fill="none" stroke="#c9a040"/><rect x="8.5" y="8.5" width="12" height="12" fill="none" stroke="#c9a040"/></svg>
<svg style="position:absolute;left:750px;top:131px;" width="22" height="22" viewBox="0 0 22 22"><rect x="1.5" y="1.5" width="19" height="19" fill="#fff" stroke="#6b6b6b" stroke-width="1.2"/><path d="M8 1.5V20.5M14.5 1.5V20.5M1.5 8H20.5M1.5 14.5H20.5" stroke="#6b6b6b" stroke-width="1.2"/></svg>
<svg style="position:absolute;left:782px;top:131px;" width="22" height="22" viewBox="0 0 22 22"><rect x="1.5" y="1.5" width="19" height="19" fill="#fff" stroke="#6b6b6b" stroke-width="1.2"/><path d="M8 1.5V20.5M14.5 1.5V20.5M1.5 8H20.5M1.5 14.5H20.5" stroke="#6b6b6b" stroke-width="1.2"/><rect x="10" y="10" width="13" height="13" fill="#c9d6e9"/><path d="M12 17C12 20.5 14.5 22 17 22C19.5 22 22 20.5 22 17C22 13.5 19.5 12 17 12H14" fill="none" stroke="#e0452a" stroke-width="2.4"/><rect x="11" y="10.8" width="3.5" height="2.6" fill="#888"/><rect x="11" y="20.6" width="3.5" height="2.6" fill="#888"/></svg>
<svg style="position:absolute;left:812px;top:131px;" width="22" height="22" viewBox="0 0 22 22"><path d="M1 1.5H21M1 8.5H21M1 15H21M1 21.5H21" stroke="#6b6b6b" stroke-width="1.2"/><path d="M1.5 2V21M8 2V21M14.5 2V21M21 2V21" stroke="#6b6b6b" stroke-dasharray="1 2"/></svg>
<svg style="position:absolute;left:843px;top:131px;" width="22" height="22" viewBox="0 0 22 22"><path d="M1 1.5H21M1 8.5H21M1 15H21M1 21.5H21" stroke="#6b6b6b" stroke-width="1.2"/><path d="M1.5 2V21M8 2V21M14.5 2V21M21 2V21" stroke="#6b6b6b" stroke-dasharray="1 2"/><rect x="10" y="10" width="13" height="13" fill="#c9d6e9"/><path d="M12 17C12 20.5 14.5 22 17 22C19.5 22 22 20.5 22 17C22 13.5 19.5 12 17 12H14" fill="none" stroke="#e0452a" stroke-width="2.4"/><rect x="11" y="10.8" width="3.5" height="2.6" fill="#888"/><rect x="11" y="20.6" width="3.5" height="2.6" fill="#888"/></svg>
<svg style="position:absolute;left:874px;top:131px;" width="22" height="22" viewBox="0 0 22 22"><path d="M1 1.5H21M1 8.5H10M1 15H10M1 21.5H10" stroke="#6b6b6b" stroke-width="1.2"/><path d="M1.5 2V21M8 2V21M14.5 2V8M21 2V8" stroke="#6b6b6b" stroke-dasharray="1 2"/><rect x="10" y="13" width="11" height="9" fill="#efbf5e"/><path d="M12.5 13V11.5C12.5 8.5 18.5 8.5 18.5 11.5V13" fill="none" stroke="#efbf5e" stroke-width="1.8"/><path d="M15.5 16V20" stroke="#fff" stroke-width="1.2"/></svg>
<svg style="position:absolute;left:905px;top:131px;" width="22" height="22" viewBox="0 0 22 22"><path d="M1.5 1V22M8 1V22M14.5 1V22M21 1V22" stroke="#6b6b6b" stroke-width="1.2"/><path d="M1 1.5H21M1 8H21M1 14.5H21M1 21H21" stroke="#6b6b6b" stroke-dasharray="1 2"/></svg>
<svg style="position:absolute;left:936px;top:131px;" width="22" height="22" viewBox="0 0 22 22"><path d="M1.5 1V22M8 1V22" stroke="#6b6b6b" stroke-width="1.2"/><path d="M1 1.5H21M1 8H10M1 14.5H10M1 21H10M14.5 1V6M21 1V6" stroke="#6b6b6b" stroke-dasharray="1 2"/><rect x="10" y="13" width="11" height="9" fill="#efbf5e"/><path d="M12.5 13V11.5C12.5 8.5 18.5 8.5 18.5 11.5V13" fill="none" stroke="#efbf5e" stroke-width="1.8"/><path d="M15.5 16V20" stroke="#fff" stroke-width="1.2"/></svg>
<svg style="position:absolute;left:966px;top:131px;" width="22" height="22" viewBox="0 0 22 22"><circle cx="11" cy="3.5" r="2.5" fill="none" stroke="#3d7dc6" stroke-width="2"/><path d="M11 6V20" stroke="#3d7dc6" stroke-width="2.6"/><path d="M2 12C2 18 6 21 11 21C16 21 20 18 20 12" fill="none" stroke="#3d7dc6" stroke-width="2.6"/><path d="M0 14L3 9L5 14ZM22 14L19 9L17 14Z" fill="#3d7dc6"/></svg>
<svg style="position:absolute;left:999px;top:131px;" width="22" height="22" viewBox="0 0 22 22"><circle cx="9" cy="3.5" r="2.5" fill="none" stroke="#3d7dc6" stroke-width="2"/><path d="M9 6V13" stroke="#3d7dc6" stroke-width="2.6"/><path d="M2 13C2 18 5 21 9 21" fill="none" stroke="#3d7dc6" stroke-width="2.6"/><rect x="10" y="13" width="11" height="9" fill="#efbf5e"/><path d="M12.5 13V11.5C12.5 8.5 18.5 8.5 18.5 11.5V13" fill="none" stroke="#efbf5e" stroke-width="1.8"/><path d="M15.5 16V20" stroke="#fff" stroke-width="1.2"/></svg>
<svg style="position:absolute;left:1036px;top:131px;" width="22" height="22" viewBox="0 0 22 22"><path d="M4 5L19 4M4 5L4 19M4 19L19 4" stroke="#3d7dc6" stroke-width="1.2"/><circle cx="4" cy="5" r="2.8" fill="#fff" stroke="#6b6b6b" stroke-width="1.4"/><rect x="16.5" y="1.5" width="4" height="4" fill="#fff" stroke="#6b6b6b" stroke-width="1.3"/><rect x="1.5" y="17" width="4" height="4" fill="#fff" stroke="#6b6b6b" stroke-width="1.3"/></svg>
<svg style="position:absolute;left:1066px;top:131px;" width="22" height="22" viewBox="0 0 22 22"><rect x="1.5" y="1.5" width="20" height="18" fill="#fff" stroke="#6b6b6b" stroke-width="1.3"/><path d="M7 6L5 8L7 10M5 6V10" fill="none" stroke="#5fa07a" stroke-width="1.4"/><path d="M5 12L7 14L5 16M7 12V16" fill="none" stroke="#e0452a" stroke-width="1.4"/><rect x="10.5" y="5.5" width="4" height="4" fill="none" stroke="#6b6b6b"/><rect x="10.5" y="12.5" width="4" height="4" fill="none" stroke="#6b6b6b"/></svg>
<div style="position:absolute;left:134px;top:129px;width:1px;height:25px;background:#a9bdd8"></div>
<div style="position:absolute;left:233px;top:129px;width:1px;height:25px;background:#a9bdd8"></div>
<div style="position:absolute;left:332px;top:129px;width:1px;height:25px;background:#a9bdd8"></div>
<div style="position:absolute;left:441px;top:129px;width:1px;height:25px;background:#a9bdd8"></div>
<div style="position:absolute;left:510px;top:129px;width:1px;height:25px;background:#a9bdd8"></div>
<div style="position:absolute;left:639px;top:129px;width:1px;height:25px;background:#a9bdd8"></div>
<div style="position:absolute;left:1027px;top:129px;width:1px;height:25px;background:#a9bdd8"></div>
<div style="position:absolute;left:404px;top:134px;width:2px;height:17px;background-image:linear-gradient(#7f93b8 50%,transparent 50%);background-size:2px 4px"></div>
<div style="position:absolute;left:742px;top:134px;width:2px;height:17px;background-image:linear-gradient(#7f93b8 50%,transparent 50%);background-size:2px 4px"></div>
<svg style="position:absolute;left:12px;top:222px;" width="22" height="22" viewBox="0 0 22 22"><path d="M11 0V22M0 11H22" stroke="#5e9e86" stroke-width="5.6"/></svg>
<svg style="position:absolute;left:43px;top:222px;" width="22" height="22" viewBox="0 0 22 22"><path d="M0 11H22" stroke="#b9b9b9" stroke-width="5.6"/></svg>
<svg style="position:absolute;left:76px;top:222px;" width="18" height="22" viewBox="0 0 18 22"><path d="M9 22V4" stroke="#b9b9b9" stroke-width="3.6"/><path d="M1 13V9L9 0.5L17 9V13L9 5Z" fill="#b9b9b9"/></svg>
<svg style="position:absolute;left:107px;top:222px;" width="18" height="22" viewBox="0 0 18 22"><path d="M9 0V18" stroke="#b9b9b9" stroke-width="3.6"/><path d="M1 9V13L9 21.5L17 13V9L9 17Z" fill="#b9b9b9"/></svg>
<svg style="position:absolute;left:1412px;top:221px;" width="24" height="24" viewBox="0 0 24 24"><path d="M3.5 11C3.5 6 7 3 12 3C15 3 17.5 4.5 19 7" fill="none" stroke="#6aa596" stroke-width="3.4"/><path d="M23 2.5V11H14.5Z" fill="#6aa596"/><path d="M20.5 13C20.5 18 17 21 12 21C9 21 6.5 19.5 5 17" fill="none" stroke="#6aa596" stroke-width="3.4"/><path d="M1 21.5V13H9.5Z" fill="#6aa596"/></svg>
<svg style="position:absolute;left:1445px;top:222px;" width="22" height="22" viewBox="0 0 22 22"><path d="M11 0V22M0 11H22" stroke="#6aa596" stroke-width="5.4"/></svg>
<svg style="position:absolute;left:1469px;top:231px;" width="7" height="4" viewBox="0 0 7 4"><path d="M0 0H7L3.5 4Z" fill="#111"/></svg>
<svg style="position:absolute;left:1484px;top:230px;" width="22" height="6" viewBox="0 0 22 6"><rect x="0" y="0" width="22" height="5.5" fill="#e05a35"/></svg>
<svg style="position:absolute;left:1513px;top:221px;" width="24" height="24" viewBox="0 0 24 24"><circle cx="12" cy="12" r="8.5" fill="none" stroke="#3d7dc6" stroke-width="1.8"/><circle cx="18.5" cy="4.5" r="3.2" fill="#3d7dc6"/><circle cx="4.5" cy="12" r="3.2" fill="#3d7dc6"/><circle cx="18.5" cy="19.5" r="3.2" fill="#3d7dc6"/></svg>
<svg style="position:absolute;left:1545px;top:221px;" width="24" height="24" viewBox="0 0 24 24"><circle cx="12" cy="12" r="11" fill="#e05a35"/><path d="M12 4.5V14" stroke="#fff" stroke-width="3.2"/><circle cx="12" cy="18" r="2" fill="#fff"/></svg>
<svg style="position:absolute;left:1576px;top:231px;" width="7" height="4" viewBox="0 0 7 4"><path d="M0 0H7L3.5 4Z" fill="#9aaac4"/></svg>
<svg style="position:absolute;left:1590px;top:221px;" width="24" height="24" viewBox="0 0 24 24"><path d="M7.5 2L10.5 1L23 14L20.5 16Z" fill="#606060"/><path d="M7.5 3.5L9.5 1.5L11.5 3.5L9.5 5.5Z" fill="#fff"/><path d="M5 8L5.9 10.2L8.2 10.2L6.4 11.6L7 13.8L5 12.5L3 13.8L3.6 11.6L1.8 10.2L4.1 10.2ZM13 12L13.8 13.8L15.8 13.8L14.2 15L14.8 17L13 15.9L11.2 17L11.8 15L10.2 13.8L12.2 13.8ZM6 15.5L6.9 17.7L9.2 17.7L7.4 19.1L8 21.3L6 20L4 21.3L4.6 19.1L2.8 17.7L5.1 17.7Z" fill="#efbf5e"/></svg>
<svg style="position:absolute;left:1863px;top:611px;" width="18" height="18" viewBox="0 0 18 18"><rect x="1" y="1" width="16" height="12.5" fill="#e2132e"/><path d="M4.8 0V8.5C4.8 10.3 5.8 11.3 7.3 11.3C8.8 11.3 9.8 10.3 9.8 8.5V0" fill="none" stroke="#fff" stroke-width="1.6"/><path d="M11.5 13.5V4L16 12" fill="none" stroke="#fff" stroke-width="1.5"/><rect x="1" y="14.5" width="16" height="2.6" fill="#222"/><path d="M2 15.8H16" stroke="#fff" stroke-width="0.6" stroke-dasharray="1.2 0.8"/></svg>
<svg style="position:absolute;left:1888px;top:583px;" width="22" height="18" viewBox="0 0 22 18"><path d="M7 2.6L9.4 0.2L18.6 9.4L16.2 11.8Z" fill="#6d6d6d"/><path d="M8.2 2.6L9.4 1.4L10.8 2.8L9.6 4Z" fill="#fff"/><path d="M5.5 5.8L6.2 7.3L7.8 7.3L6.5 8.3L7 9.9L5.5 9L4 9.9L4.5 8.3L3.2 7.3L4.8 7.3ZM10.5 9.3L11.1 10.6L12.5 10.6L11.4 11.4L11.8 12.8L10.5 12L9.2 12.8L9.6 11.4L8.5 10.6L9.9 10.6ZM6 12.8L6.7 14.3L8.3 14.3L7 15.3L7.5 16.9L6 16L4.5 16.9L5 15.3L3.7 14.3L5.3 14.3Z" fill="#f0c060"/></svg>
<svg style="position:absolute;left:1888px;top:611px;" width="22" height="18" viewBox="0 0 22 18"><path d="M7 2.6L9.4 0.2L18.6 9.4L16.2 11.8Z" fill="#6d6d6d"/><path d="M8.2 2.6L9.4 1.4L10.8 2.8L9.6 4Z" fill="#fff"/><path d="M5.5 5.8L6.2 7.3L7.8 7.3L6.5 8.3L7 9.9L5.5 9L4 9.9L4.5 8.3L3.2 7.3L4.8 7.3ZM10.5 9.3L11.1 10.6L12.5 10.6L11.4 11.4L11.8 12.8L10.5 12L9.2 12.8L9.6 11.4L8.5 10.6L9.9 10.6ZM6 12.8L6.7 14.3L8.3 14.3L7 15.3L7.5 16.9L6 16L4.5 16.9L5 15.3L3.7 14.3L5.3 14.3Z" fill="#f0c060"/></svg>
<svg style="position:absolute;left:0px;top:0px;" width="34" height="31" viewBox="0 0 34 31"><rect x="8" y="4.5" width="15.5" height="20" fill="#1c5fe6"/><rect x="8" y="4.5" width="15.5" height="20" fill="none" stroke="#3d8af8" stroke-width="1"/><rect x="10.8" y="6.5" width="11" height="16.5" fill="#e8f0fc"/><path d="M12.5 21.5V8.5H21V11.5H16V13.8H20V16.5H16V21.5Z" fill="#0a3ed8"/><path d="M23.5 15.5L30 8.5L30 13.5L25.5 18.5Z" fill="#5a9af0"/><path d="M22.5 16.5L25.5 19.5" stroke="#111" stroke-width="2"/><path d="M17 25L22.5 17L25 19.5Z" fill="#f0c040"/></svg>
</body></html>
